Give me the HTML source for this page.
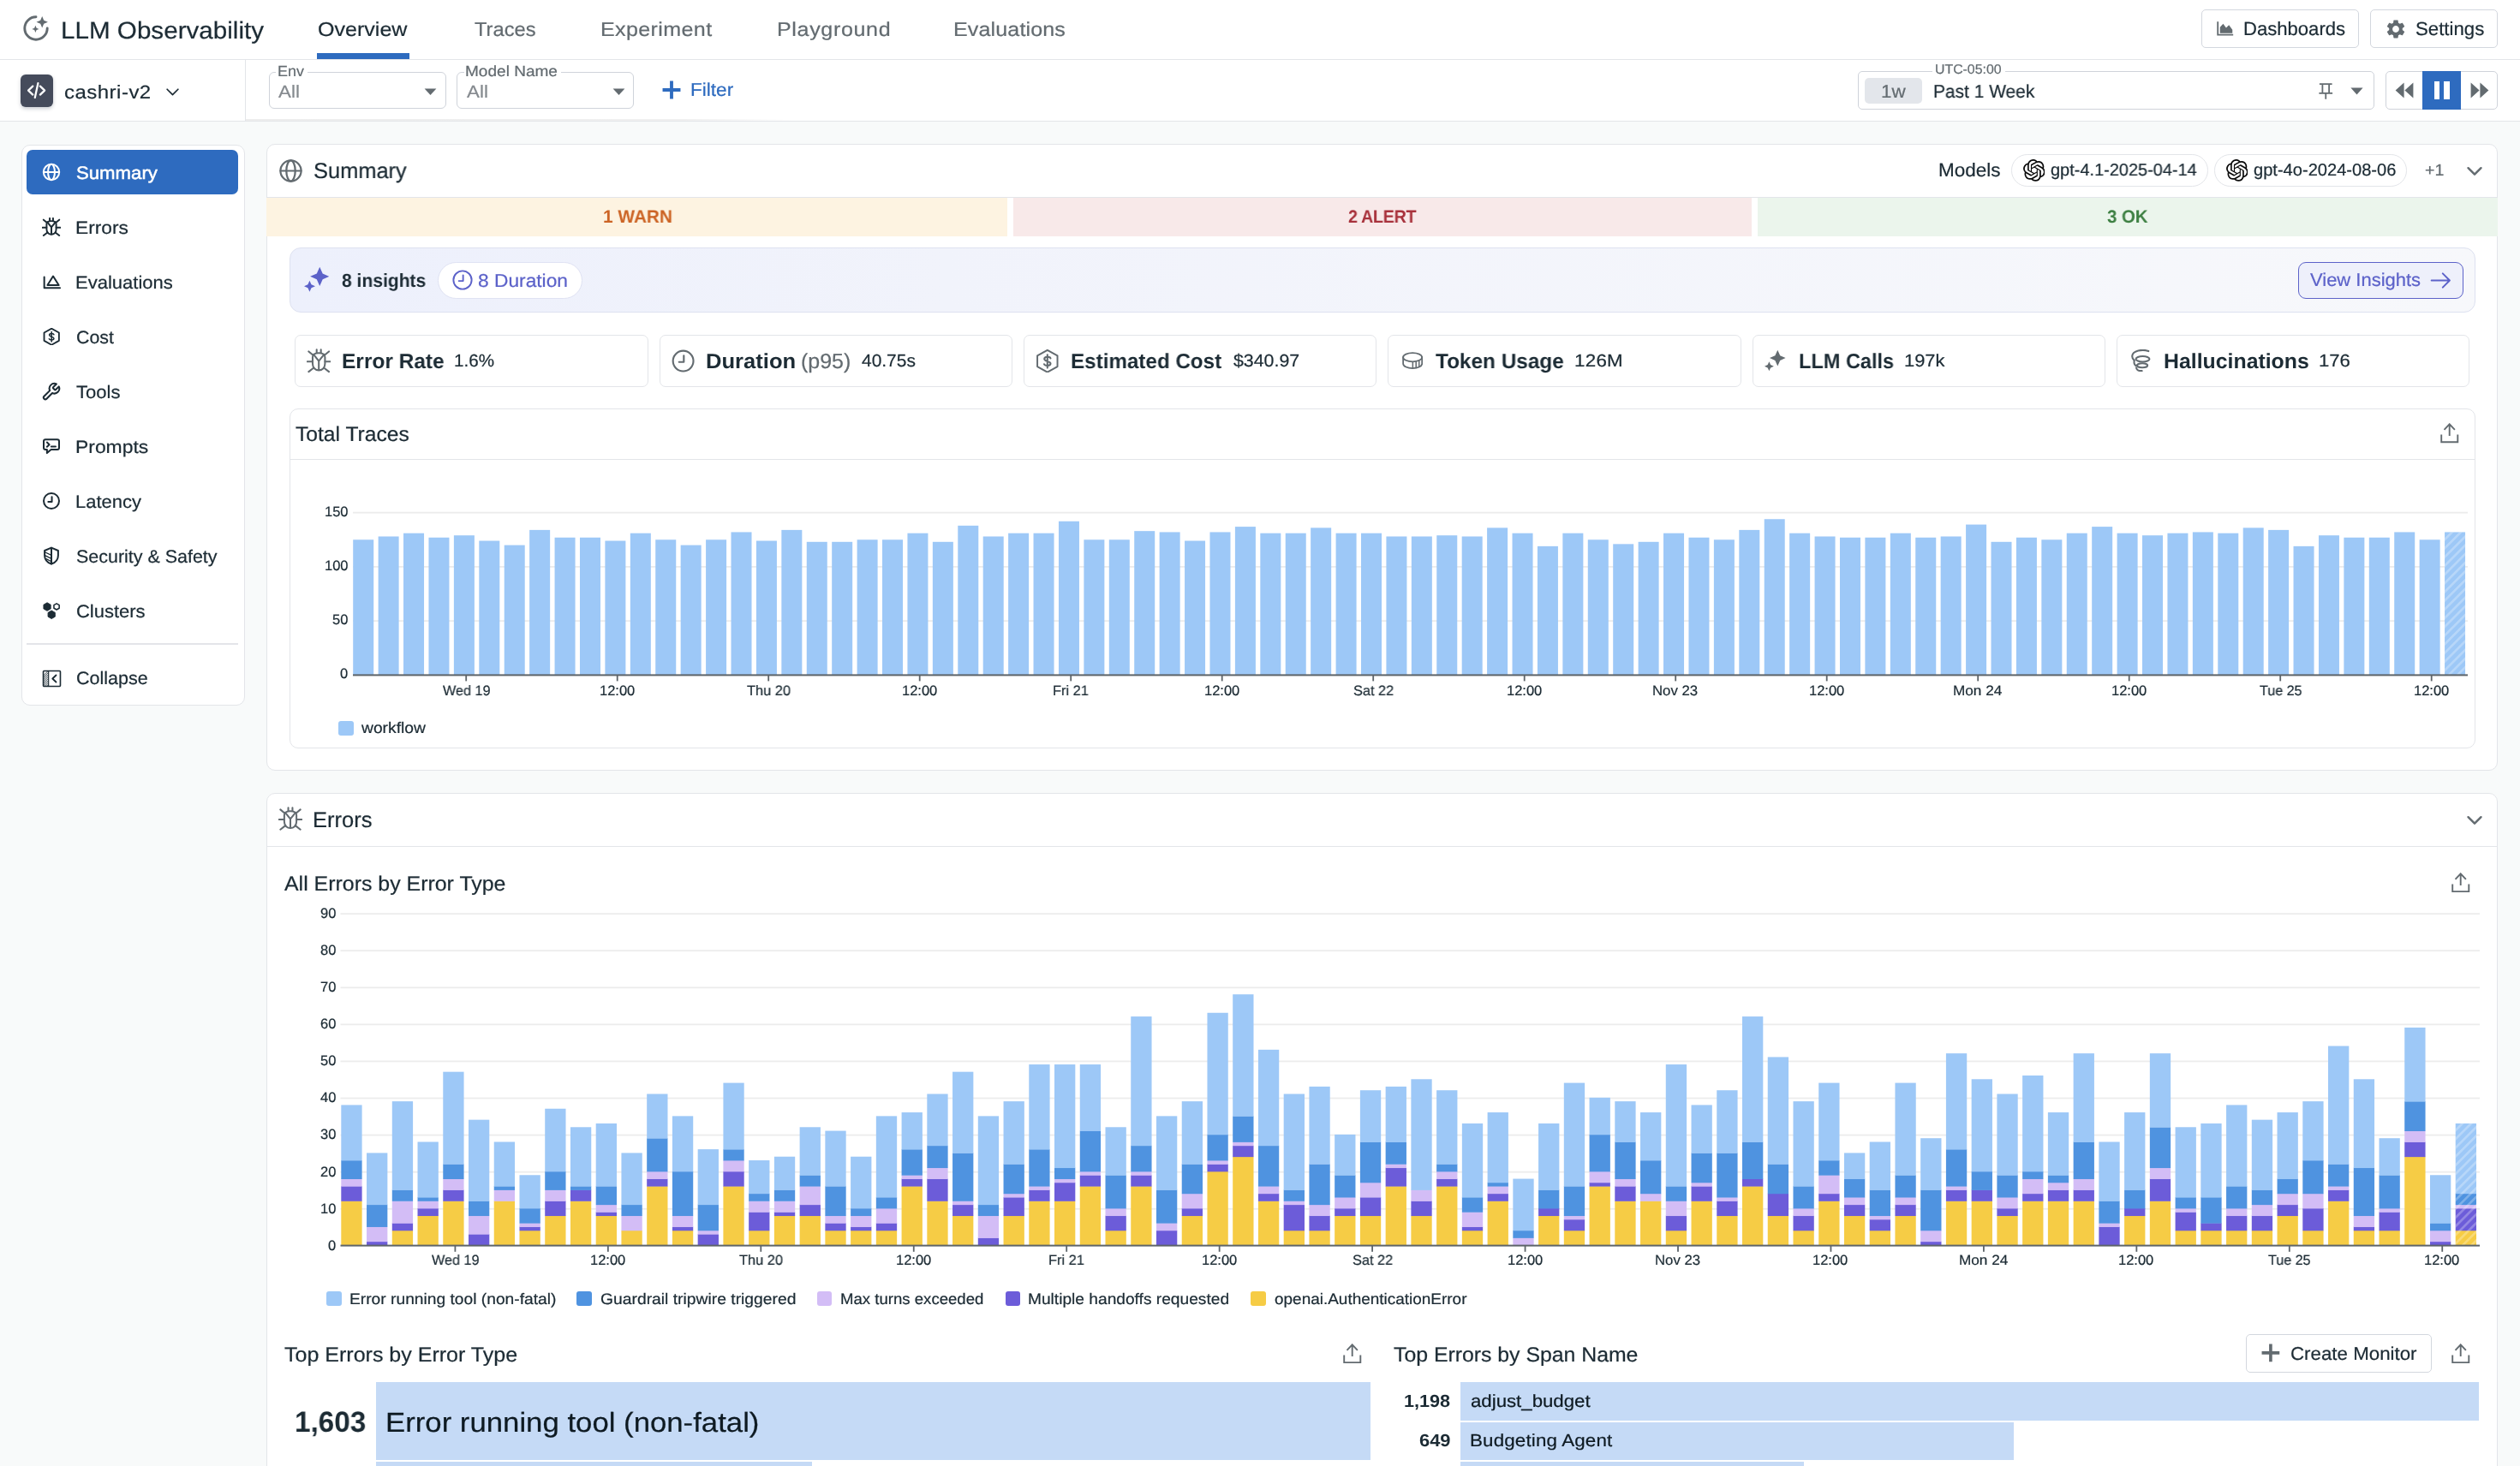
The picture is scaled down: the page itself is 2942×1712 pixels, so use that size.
<!DOCTYPE html>
<html><head><meta charset="utf-8"><title>LLM Observability</title>
<style>
html,body{margin:0;padding:0;overflow:hidden;}
body{width:2942px;height:1712px;overflow:hidden;background:#f8fafa;font-family:"Liberation Sans",sans-serif;position:relative;}
.a{position:absolute;display:block;}
.t{position:absolute;white-space:nowrap;display:block;transform-origin:0 0;will-change:transform;text-rendering:geometricPrecision;}
#root{position:absolute;left:0;top:0;width:2942px;height:1712px;overflow:hidden;}
</style></head><body>
<div id="root">
<div class="a" style="left:0.00px;top:0.00px;width:2942.00px;height:69.40px;background:#fff;"></div>
<div class="a" style="left:0.00px;top:69.00px;width:2942.00px;height:1.40px;background:#e3e5e9;"></div>
<svg class="a" style="left:25.50px;top:17.40px;" width="32.00" height="32.00" viewBox="0 0 32 32" fill="none"><path d="M 16 2.8 A 13.2 13.2 0 1 0 29.2 16" stroke="#636b70" stroke-width="2.9" stroke-linecap="round" fill="none"/><path d="M23.20,2.10 L25.19,6.81 L29.90,8.80 L25.19,10.79 L23.20,15.50 L21.21,10.79 L16.50,8.80 L21.21,6.81Z" fill="#636b70"/><path d="M15.40,12.80 L16.62,15.68 L19.50,16.90 L16.62,18.12 L15.40,21.00 L14.18,18.12 L11.30,16.90 L14.18,15.68Z" fill="#636b70"/></svg>
<span class="t" style="left:70.63px;top:22.00px;font-size:28px;line-height:28px;color:#1c2b34;-webkit-text-stroke:0.22px #1c2b34;transform:scaleX(1.0577);">LLM Observability</span>
<span class="t" style="left:371.17px;top:23.00px;font-size:23px;line-height:23px;color:#1c2b34;-webkit-text-stroke:0.22px #1c2b34;transform:scaleX(1.0899);">Overview</span>
<div class="a" style="left:370.30px;top:62.20px;width:107.70px;height:6.80px;background:#2e6bbf;"></div>
<span class="t" style="left:553.53px;top:23.00px;font-size:23px;line-height:23px;color:#636b70;-webkit-text-stroke:0.22px #636b70;transform:scaleX(1.0309);">Traces</span>
<span class="t" style="left:701.29px;top:23.00px;font-size:23px;line-height:23px;color:#636b70;-webkit-text-stroke:0.22px #636b70;letter-spacing:0.337px;transform:scaleX(1.0900);">Experiment</span>
<span class="t" style="left:906.69px;top:23.00px;font-size:23px;line-height:23px;color:#636b70;-webkit-text-stroke:0.22px #636b70;letter-spacing:0.589px;transform:scaleX(1.0900);">Playground</span>
<span class="t" style="left:1112.99px;top:23.00px;font-size:23px;line-height:23px;color:#636b70;-webkit-text-stroke:0.22px #636b70;letter-spacing:0.117px;transform:scaleX(1.0900);">Evaluations</span>
<div class="a" style="left:2570.00px;top:11.20px;width:183.60px;height:44.50px;background:#fff;border:1.4px solid #d3d7de;box-sizing:border-box;border-radius:5px;"></div>
<svg class="a" style="left:2585.60px;top:21.60px;" width="24.00" height="22.00" viewBox="0 0 24 24" fill="none"><path d="M2.4 3.6 V20.4 H22" stroke="#636b70" stroke-width="2" fill="none" stroke-linecap="butt"/><path d="M5.2 18.4 V10.6 L9.2 6.4 L13 11.4 L16.6 8 L21 14 V18.4 Z" fill="#636b70"/></svg>
<span class="t" style="left:2618.73px;top:23.00px;font-size:22px;line-height:22px;color:#1c2b34;-webkit-text-stroke:0.22px #1c2b34;transform:scaleX(1.0039);">Dashboards</span>
<div class="a" style="left:2767.00px;top:11.20px;width:149.00px;height:44.50px;background:#fff;border:1.4px solid #d3d7de;box-sizing:border-box;border-radius:5px;"></div>
<svg class="a" style="left:2783.70px;top:20.90px;" width="26.00" height="26.00" viewBox="0 0 24 24" fill="none"><path d="M19.14,12.94c0.04-0.3,0.06-0.61,0.06-0.94c0-0.32-0.02-0.64-0.07-0.94l2.03-1.58c0.18-0.14,0.23-0.41,0.12-0.61 l-1.92-3.32c-0.12-0.22-0.37-0.29-0.59-0.22l-2.39,0.96c-0.5-0.38-1.03-0.7-1.62-0.94L14.4,2.81c-0.04-0.24-0.24-0.41-0.48-0.41 h-3.84c-0.24,0-0.43,0.17-0.47,0.41L9.25,5.35C8.66,5.59,8.12,5.92,7.63,6.29L5.24,5.33c-0.22-0.08-0.47,0-0.59,0.22L2.74,8.87 C2.62,9.08,2.66,9.34,2.86,9.48l2.03,1.58C4.84,11.36,4.8,11.69,4.8,12s0.02,0.64,0.07,0.94l-2.03,1.58 c-0.18,0.14-0.23,0.41-0.12,0.61l1.92,3.32c0.12,0.22,0.37,0.29,0.59,0.22l2.39-0.96c0.5,0.38,1.03,0.7,1.62,0.94l0.36,2.54 c0.05,0.24,0.24,0.41,0.48,0.41h3.84c0.24,0,0.44-0.17,0.47-0.41l0.36-2.54c0.59-0.24,1.13-0.56,1.62-0.94l2.39,0.96 c0.22,0.08,0.47,0,0.59-0.22l1.92-3.32c0.12-0.22,0.07-0.47-0.12-0.61L19.14,12.94z M12,15.6c-1.98,0-3.6-1.62-3.6-3.6 s1.62-3.6,3.6-3.6s3.6,1.62,3.6,3.6S13.98,15.6,12,15.6z" fill="#636b70"/></svg>
<span class="t" style="left:2819.50px;top:23.00px;font-size:22px;line-height:22px;color:#1c2b34;-webkit-text-stroke:0.22px #1c2b34;transform:scaleX(1.0094);">Settings</span>
<div class="a" style="left:0.00px;top:70.40px;width:2942.00px;height:70.60px;background:#fff;"></div>
<div class="a" style="left:0.00px;top:140.60px;width:2942.00px;height:1.40px;background:#e3e5e9;"></div>
<div class="a" style="left:286.00px;top:70.40px;width:1.40px;height:70.60px;background:#e3e5e9;"></div>
<div class="a" style="left:23.80px;top:86.90px;width:38.20px;height:37.80px;background:#454b5b;border-radius:6px;box-shadow:0 2px 4px rgba(40,50,70,.25);"></div>
<svg class="a" style="left:29.40px;top:92.40px;" width="27.20" height="27.20" viewBox="0 0 24 24" fill="none"><path d="M8.2 7.6 L3.6 12 L8.2 16.4 M15.8 7.6 L20.4 12 L15.8 16.4 M13.6 4.6 L10.4 19.4" stroke="#fff" stroke-width="2.0" stroke-linecap="round" stroke-linejoin="round" fill="none"/></svg>
<span class="t" style="left:74.74px;top:97.00px;font-size:22px;line-height:22px;color:#1c2b34;-webkit-text-stroke:0.22px #1c2b34;letter-spacing:0.449px;transform:scaleX(1.0900);">cashri-v2</span>
<svg class="a" style="left:193.00px;top:98.50px;" width="17.00" height="17.00" viewBox="0 0 24 24" fill="none"><path d="M3 7.4 L12 16.4 L21 7.4" stroke="#1c2b34" stroke-width="2.4" stroke-linecap="round" stroke-linejoin="round" fill="none"/></svg>
<div class="a" style="left:287.00px;top:139.40px;width:640.00px;height:1.20px;background:linear-gradient(90deg,rgba(0,0,0,.07) 0%,rgba(0,0,0,.06) 80%,rgba(0,0,0,0) 100%);"></div>
<div class="a" style="left:313.50px;top:83.80px;width:207.20px;height:43.70px;background:#fff;border:1.4px solid #cfd3da;box-sizing:border-box;border-radius:6px;"></div>
<div class="a" style="left:322.00px;top:83.00px;width:37.40px;height:4.00px;background:#fff;"></div>
<span class="t" style="left:323.57px;top:75.00px;font-size:17.5px;line-height:17.5px;color:#636b70;-webkit-text-stroke:0.22px #636b70;transform:scaleX(1.0244);">Env</span>
<span class="t" style="left:325.00px;top:98.00px;font-size:20.5px;line-height:20.5px;color:#858a8f;-webkit-text-stroke:0.22px #858a8f;letter-spacing:0.023px;transform:scaleX(1.0900);">All</span>
<svg class="a" style="left:495.0px;top:102.8px" width="15" height="8.4" viewBox="0 0 15 8.4"><path d="M0.6 0.4 H14.4 L7.5 8 Z" fill="#636b70"/></svg>
<div class="a" style="left:533.30px;top:83.80px;width:207.20px;height:43.70px;background:#fff;border:1.4px solid #cfd3da;box-sizing:border-box;border-radius:6px;"></div>
<div class="a" style="left:541.80px;top:83.00px;width:113.60px;height:4.00px;background:#fff;"></div>
<span class="t" style="left:543.28px;top:75.00px;font-size:17.5px;line-height:17.5px;color:#636b70;-webkit-text-stroke:0.22px #636b70;transform:scaleX(1.0882);">Model Name</span>
<span class="t" style="left:544.80px;top:98.00px;font-size:20.5px;line-height:20.5px;color:#858a8f;-webkit-text-stroke:0.22px #858a8f;letter-spacing:0.023px;transform:scaleX(1.0900);">All</span>
<svg class="a" style="left:714.8px;top:102.8px" width="15" height="8.4" viewBox="0 0 15 8.4"><path d="M0.6 0.4 H14.4 L7.5 8 Z" fill="#636b70"/></svg>
<svg class="a" style="left:772.80px;top:93.60px;" width="22.00" height="22.00" viewBox="0 0 24 24" fill="none"><path d="M12 0.6 V23.4 M0.6 12 H23.4" stroke="#2e6bbf" stroke-width="4.2" stroke-linecap="butt"/></svg>
<span class="t" style="left:806.19px;top:95.00px;font-size:21.5px;line-height:21.5px;color:#2e6bbf;-webkit-text-stroke:0.22px #2e6bbf;transform:scaleX(1.0506);">Filter</span>
<div class="a" style="left:2169.30px;top:83.40px;width:602.30px;height:44.20px;background:#fff;border:1.4px solid #cfd3da;box-sizing:border-box;border-radius:5px;"></div>
<div class="a" style="left:2177.00px;top:90.80px;width:66.70px;height:30.00px;background:#e3e6eb;border-radius:5px;"></div>
<span class="t" style="left:2195.72px;top:97.00px;font-size:21.5px;line-height:21.5px;color:#636b70;-webkit-text-stroke:0.22px #636b70;transform:scaleX(1.0422);">1w</span>
<div class="a" style="left:2256.00px;top:80.00px;width:85.00px;height:6.00px;background:#fff;"></div>
<span class="t" style="left:2259.41px;top:74.00px;font-size:15.5px;line-height:15.5px;color:#636b70;-webkit-text-stroke:0.22px #636b70;transform:scaleX(1.0231);">UTC-05:00</span>
<span class="t" style="left:2257.03px;top:97.00px;font-size:21.5px;line-height:21.5px;color:#1c2b34;-webkit-text-stroke:0.22px #1c2b34;transform:scaleX(0.9737);">Past 1 Week</span>
<svg class="a" style="left:2707.00px;top:96.50px;" width="16.50" height="19.00" viewBox="0 0 16.5 19" fill="none"><path d="M0.9 1.2 H15.6 M4.4 1.2 V11.4 M12.1 1.2 V11.4 M0.4 11.8 H16.1 M8.25 11.8 V18.8" stroke="#636b70" stroke-width="1.8" fill="none" stroke-linecap="butt"/></svg>
<svg class="a" style="left:2744px;top:101.7px" width="15" height="9" viewBox="0 0 15 9"><path d="M0.4 0.4 H14.6 L7.5 8.6 Z" fill="#636b70"/></svg>
<div class="a" style="left:2785.00px;top:83.40px;width:131.00px;height:44.20px;background:#fff;border:1.4px solid #cfd3da;box-sizing:border-box;border-radius:5px;"></div>
<div class="a" style="left:2828.00px;top:83.40px;width:45.30px;height:44.20px;background:#2e6bbf;"></div>
<svg class="a" style="left:2796px;top:96px" width="22" height="19" viewBox="0 0 22 19"><path d="M10.6 0.6 V18.4 L0.6 9.5 Z M21.4 0.6 V18.4 L11.4 9.5 Z" fill="#636b70"/></svg>
<svg class="a" style="left:2884px;top:96px" width="22" height="19" viewBox="0 0 22 19"><path d="M0.6 0.6 V18.4 L10.6 9.5 Z M11.4 0.6 V18.4 L21.4 9.5 Z" fill="#636b70"/></svg>
<div class="a" style="left:2842.00px;top:95.00px;width:6.40px;height:21.00px;background:#fff;"></div>
<div class="a" style="left:2853.20px;top:95.00px;width:6.40px;height:21.00px;background:#fff;"></div>
<div class="a" style="left:24.60px;top:168.50px;width:261.00px;height:655.40px;background:#fff;border:1.4px solid #e3e5e9;box-sizing:border-box;border-radius:10px;"></div>
<div class="a" style="left:31.30px;top:175.00px;width:246.70px;height:51.70px;background:#2e6bbf;border-radius:7px;"></div>
<svg class="a" style="left:49.00px;top:190.20px;" width="22.00" height="22.00" viewBox="0 0 24 24" fill="none"><circle cx="12" cy="12" r="10" stroke="#fff" stroke-width="2.2" stroke-linecap="round" stroke-linejoin="round"/><ellipse cx="12" cy="12" rx="4.3" ry="10" stroke="#fff" stroke-width="2.2" stroke-linecap="round" stroke-linejoin="round"/><path d="M2 12 H22" stroke="#fff" stroke-width="2.2" stroke-linecap="round" stroke-linejoin="round"/></svg>
<span class="t" style="left:88.80px;top:192.00px;font-size:21px;line-height:21px;color:#fff;-webkit-text-stroke:0.5px #fff;transform:scaleX(1.0558);">Summary</span>
<svg class="a" style="left:49.00px;top:254.20px;" width="22.00" height="22.00" viewBox="0 0 24 24" fill="none"><path d="M5.9 8.4 C5.9 3.2 18.1 3.2 18.1 8.4 V15 C18.1 23.6 5.9 23.6 5.9 15 Z" stroke="#1c2b34" stroke-width="2.15" stroke-linecap="round" stroke-linejoin="round" fill="none"/><path d="M12 12.4 V21.2 M12 12.4 L6.8 5.8 M12 12.4 L17.2 5.8" stroke="#1c2b34" stroke-width="2.15" stroke-linecap="round" stroke-linejoin="round" fill="none"/><path d="M9.9 4.2 V1 M14.1 4.2 V1" stroke="#1c2b34" stroke-width="2.15" stroke-linecap="round" stroke-linejoin="round"/><path d="M6.4 6.6 L2 2.9 M17.6 6.6 L22 2.9 M5.8 12.9 H0.6 M18.2 12.9 H23.4 M7 19 L2 22.9 M17 19 L22 22.9" stroke="#1c2b34" stroke-width="2.15" stroke-linecap="round" stroke-linejoin="round"/></svg>
<span class="t" style="left:87.98px;top:256.00px;font-size:21px;line-height:21px;color:#1c2b34;-webkit-text-stroke:0.22px #1c2b34;transform:scaleX(1.0822);">Errors</span>
<svg class="a" style="left:49.00px;top:318.20px;" width="22.00" height="22.00" viewBox="0 0 24 24" fill="none"><path d="M2.9 6 V20 H23" stroke="#1c2b34" stroke-width="2.2" stroke-linecap="round" stroke-linejoin="round" fill="none" stroke-linecap="butt"/><path d="M7 16.4 L14.2 5 L21.4 16.4 Z" stroke="#1c2b34" stroke-width="2.2" stroke-linecap="round" stroke-linejoin="round" fill="none"/></svg>
<span class="t" style="left:88.04px;top:320.00px;font-size:21px;line-height:21px;color:#1c2b34;-webkit-text-stroke:0.22px #1c2b34;transform:scaleX(1.0485);">Evaluations</span>
<svg class="a" style="left:49.90px;top:383.00px;" width="20.40" height="20.40" viewBox="0 0 24 24" fill="none"><path d="M12 0.8 L22.2 6.5 V17.5 L12 23.2 L1.8 17.5 V6.5 Z" stroke="#1c2b34" stroke-width="2.2" stroke-linecap="round" stroke-linejoin="round" fill="none"/><path d="M15.2 9.1 C14.6 7.2 8.9 7 8.9 9.8 C8.9 12.6 15.2 11.6 15.2 14.4 C15.2 17.2 9.4 17 8.7 15 M12 5.4 V18.8" stroke="#1c2b34" stroke-width="1.8" stroke-linecap="round" stroke-linejoin="round" fill="none"/></svg>
<span class="t" style="left:88.73px;top:384.00px;font-size:21px;line-height:21px;color:#1c2b34;-webkit-text-stroke:0.22px #1c2b34;transform:scaleX(1.0143);">Cost</span>
<svg class="a" style="left:48.40px;top:445.60px;" width="23.20" height="23.20" viewBox="0 0 24 24" fill="none"><path d="M14.7 6.3a1 1 0 0 0 0 1.4l1.6 1.6a1 1 0 0 0 1.4 0l3.77-3.77a6 6 0 0 1-7.94 7.94l-6.91 6.91a2.12 2.12 0 0 1-3-3l6.91-6.91a6 6 0 0 1 7.94-7.94l-3.76 3.76z" stroke="#1c2b34" stroke-width="2.1" stroke-linecap="round" stroke-linejoin="round" fill="none"/></svg>
<span class="t" style="left:89.36px;top:448.00px;font-size:21px;line-height:21px;color:#1c2b34;-webkit-text-stroke:0.22px #1c2b34;transform:scaleX(1.0485);">Tools</span>
<svg class="a" style="left:49.00px;top:510.20px;" width="22.00" height="22.00" viewBox="0 0 24 24" fill="none"><path d="M4.4 3.6 H19.6 C21 3.6 21.8 4.4 21.8 5.8 V14.2 C21.8 15.6 21 16.4 19.6 16.4 H11.6 L6.4 20.8 V16.4 H4.4 C3 16.4 2.2 15.6 2.2 14.2 V5.8 C2.2 4.4 3 3.6 4.4 3.6 Z" stroke="#1c2b34" stroke-width="2.2" stroke-linecap="round" stroke-linejoin="round" fill="none"/><path d="M6.4 7.2 L9.4 10 L6.4 12.8 M11.8 12.6 H17.4" stroke="#1c2b34" stroke-width="2.2" stroke-linecap="round" stroke-linejoin="round" fill="none"/></svg>
<span class="t" style="left:87.97px;top:512.00px;font-size:21px;line-height:21px;color:#1c2b34;-webkit-text-stroke:0.22px #1c2b34;transform:scaleX(1.0896);">Prompts</span>
<svg class="a" style="left:49.00px;top:574.20px;" width="22.00" height="22.00" viewBox="0 0 24 24" fill="none"><circle cx="12" cy="12" r="9.8" stroke="#1c2b34" stroke-width="2.2" stroke-linecap="round" stroke-linejoin="round"/><path d="M12.6 6.8 V13 H8" stroke="#1c2b34" stroke-width="2.2" stroke-linecap="round" stroke-linejoin="round" fill="none"/></svg>
<span class="t" style="left:88.04px;top:576.00px;font-size:21px;line-height:21px;color:#1c2b34;-webkit-text-stroke:0.22px #1c2b34;transform:scaleX(1.0455);">Latency</span>
<svg class="a" style="left:49.00px;top:638.20px;" width="22.00" height="22.00" viewBox="0 0 24 24" fill="none"><path d="M12 1.8 L20.6 5.4 V11.6 C20.6 17 16.6 20.8 12 22.4 C7.4 20.8 3.4 17 3.4 11.6 V5.4 Z" stroke="#1c2b34" stroke-width="2.2" stroke-linecap="round" stroke-linejoin="round" fill="none"/><path d="M12 1.8 V22.4" stroke="#1c2b34" stroke-width="2.2" stroke-linecap="round" stroke-linejoin="round"/><path d="M3.6 7.4 L12 11.4 M3.8 11.6 L12 15.6 M5.4 16 L12 19.4" stroke="#1c2b34" stroke-width="1.4" stroke-linecap="round" stroke-linejoin="round"/></svg>
<span class="t" style="left:88.83px;top:640.00px;font-size:21px;line-height:21px;color:#1c2b34;-webkit-text-stroke:0.22px #1c2b34;transform:scaleX(1.0217);">Security &amp; Safety</span>
<svg class="a" style="left:49.00px;top:702.20px;" width="22.00" height="22.00" viewBox="0 0 24 24" fill="none"><polygon points="11.10,9.80 6.60,12.40 2.10,9.80 2.10,4.60 6.60,2.00 11.10,4.60" fill="#1c2b34" stroke="#1c2b34" stroke-width="1" stroke-linejoin="round"/><polygon points="16.70,19.80 12.20,22.40 7.70,19.80 7.70,14.60 12.20,12.00 16.70,14.60" fill="#1c2b34" stroke="#1c2b34" stroke-width="1" stroke-linejoin="round"/><polygon points="21.98,8.95 18.60,10.90 15.22,8.95 15.22,5.05 18.60,3.10 21.98,5.05" fill="none" stroke="#1c2b34" stroke-width="1.7" stroke-linejoin="round"/></svg>
<span class="t" style="left:88.70px;top:704.00px;font-size:21px;line-height:21px;color:#1c2b34;-webkit-text-stroke:0.22px #1c2b34;transform:scaleX(1.0467);">Clusters</span>
<div class="a" style="left:31.00px;top:751.30px;width:247.00px;height:1.60px;background:#e3e5e9;"></div>
<svg class="a" style="left:48.50px;top:780.50px;" width="23.00" height="23.00" viewBox="0 0 24 24" fill="none"><clipPath id="cpc"><rect x="1.6" y="2.6" width="6.4" height="18.8"/></clipPath><g clip-path="url(#cpc)"><path d="M1.6 8.6 L8 2.0" stroke="#1c2b34" stroke-width="0.9"/><path d="M1.6 11.0 L8 4.4" stroke="#1c2b34" stroke-width="0.9"/><path d="M1.6 13.4 L8 6.800000000000001" stroke="#1c2b34" stroke-width="0.9"/><path d="M1.6 15.799999999999999 L8 9.2" stroke="#1c2b34" stroke-width="0.9"/><path d="M1.6 18.2 L8 11.6" stroke="#1c2b34" stroke-width="0.9"/><path d="M1.6 20.6 L8 14.0" stroke="#1c2b34" stroke-width="0.9"/><path d="M1.6 23.0 L8 16.4" stroke="#1c2b34" stroke-width="0.9"/><path d="M1.6 25.4 L8 18.8" stroke="#1c2b34" stroke-width="0.9"/><path d="M1.6 27.799999999999997 L8 21.2" stroke="#1c2b34" stroke-width="0.9"/></g><rect x="1.6" y="2.6" width="20.8" height="18.8" rx="1" stroke="#1c2b34" stroke-width="1.7" stroke-linecap="round" stroke-linejoin="round" fill="none"/><path d="M8 2.6 V21.4" stroke="#1c2b34" stroke-width="1.2"/><path d="M17.2 7.8 L12.8 12 L17.2 16.2" stroke="#1c2b34" stroke-width="1.9" stroke-linecap="round" stroke-linejoin="round" fill="none"/></svg>
<span class="t" style="left:88.72px;top:782.00px;font-size:21px;line-height:21px;color:#1c2b34;-webkit-text-stroke:0.22px #1c2b34;transform:scaleX(1.0239);">Collapse</span>
<div class="a" style="left:310.90px;top:167.80px;width:2605.50px;height:732.20px;background:#fff;border:1.4px solid #e3e5e9;box-sizing:border-box;border-radius:10px;"></div>
<svg class="a" style="left:324.70px;top:184.60px;" width="29.00" height="29.00" viewBox="0 0 24 24" fill="none"><circle cx="12" cy="12" r="10" stroke="#636b70" stroke-width="1.85" stroke-linecap="round" stroke-linejoin="round"/><ellipse cx="12" cy="12" rx="4.3" ry="10" stroke="#636b70" stroke-width="1.85" stroke-linecap="round" stroke-linejoin="round"/><path d="M2 12 H22" stroke="#636b70" stroke-width="1.85" stroke-linecap="round" stroke-linejoin="round"/></svg>
<span class="t" style="left:365.86px;top:188.00px;font-size:25.5px;line-height:25.5px;color:#1c2b34;-webkit-text-stroke:0.22px #1c2b34;transform:scaleX(0.9964);">Summary</span>
<span class="t" style="left:2262.90px;top:188.00px;font-size:22px;line-height:22px;color:#1c2b34;-webkit-text-stroke:0.22px #1c2b34;transform:scaleX(1.0231);">Models</span>
<div class="a" style="left:2348.40px;top:180.20px;width:229.20px;height:37.40px;background:#fff;border:1.4px solid #e3e5e9;box-sizing:border-box;border-radius:18.7px;"></div>
<svg class="a" style="left:2361.60px;top:186.20px;" width="25.80" height="25.80" viewBox="0 0 24 24" fill="none"><path d="M22.2819 9.8211a5.9847 5.9847 0 0 0-.5157-4.9108 6.0462 6.0462 0 0 0-6.5098-2.9A6.0651 6.0651 0 0 0 4.9807 4.1818a5.9847 5.9847 0 0 0-3.9977 2.9 6.0462 6.0462 0 0 0 .7427 7.0966 5.98 5.98 0 0 0 .511 4.9107 6.051 6.051 0 0 0 6.5146 2.9001A5.9847 5.9847 0 0 0 13.2599 24a6.0557 6.0557 0 0 0 5.7718-4.2058 5.9894 5.9894 0 0 0 3.9977-2.9001 6.0557 6.0557 0 0 0-.7475-7.0729zm-9.022 12.6081a4.4755 4.4755 0 0 1-2.8764-1.0408l.1419-.0804 4.7783-2.7582a.7948.7948 0 0 0 .3927-.6813v-6.7369l2.02 1.1686a.071.071 0 0 1 .038.0615v5.5826a4.504 4.504 0 0 1-4.4945 4.4849zm-9.6607-4.1254a4.4708 4.4708 0 0 1-.5346-3.0137l.142.0852 4.783 2.7582a.7712.7712 0 0 0 .7806 0l5.8428-3.3685v2.3324a.0804.0804 0 0 1-.0332.0615L9.74 19.9502a4.4992 4.4992 0 0 1-6.1408-1.6464zM2.3408 7.8956a4.485 4.485 0 0 1 2.3655-1.9728V11.6a.7664.7664 0 0 0 .3879.6765l5.8144 3.3543-2.0201 1.1685a.0757.0757 0 0 1-.071 0l-4.8303-2.7865A4.504 4.504 0 0 1 2.3408 7.872zm16.5963 3.8558L13.1038 8.364 15.1192 7.2a.0757.0757 0 0 1 .071 0l4.8303 2.7913a4.4944 4.4944 0 0 1-.6765 8.1042v-5.6772a.79.79 0 0 0-.407-.667zm2.0107-3.0231l-.142-.0852-4.7735-2.7818a.7759.7759 0 0 0-.7854 0L9.409 9.2297V6.8974a.0662.0662 0 0 1 .0284-.0615l4.8303-2.7866a4.4992 4.4992 0 0 1 6.6802 4.66zM8.3065 12.863l-2.02-1.1638a.0804.0804 0 0 1-.038-.0567V6.0742a4.4992 4.4992 0 0 1 7.3757-3.4537l-.142.0805L8.704 5.459a.7948.7948 0 0 0-.3927.6813zm1.0976-2.3654l2.602-1.4998 2.6069 1.4998v2.9994l-2.5974 1.4997-2.6067-1.4997Z" fill="#0b0b0b"/></svg>
<span class="t" style="left:2393.60px;top:189.00px;font-size:20px;line-height:20px;color:#1c2b34;-webkit-text-stroke:0.22px #1c2b34;transform:scaleX(0.9971);">gpt-4.1-2025-04-14</span>
<div class="a" style="left:2585.40px;top:180.20px;width:224.30px;height:37.40px;background:#fff;border:1.4px solid #e3e5e9;box-sizing:border-box;border-radius:18.7px;"></div>
<svg class="a" style="left:2598.60px;top:186.20px;" width="25.80" height="25.80" viewBox="0 0 24 24" fill="none"><path d="M22.2819 9.8211a5.9847 5.9847 0 0 0-.5157-4.9108 6.0462 6.0462 0 0 0-6.5098-2.9A6.0651 6.0651 0 0 0 4.9807 4.1818a5.9847 5.9847 0 0 0-3.9977 2.9 6.0462 6.0462 0 0 0 .7427 7.0966 5.98 5.98 0 0 0 .511 4.9107 6.051 6.051 0 0 0 6.5146 2.9001A5.9847 5.9847 0 0 0 13.2599 24a6.0557 6.0557 0 0 0 5.7718-4.2058 5.9894 5.9894 0 0 0 3.9977-2.9001 6.0557 6.0557 0 0 0-.7475-7.0729zm-9.022 12.6081a4.4755 4.4755 0 0 1-2.8764-1.0408l.1419-.0804 4.7783-2.7582a.7948.7948 0 0 0 .3927-.6813v-6.7369l2.02 1.1686a.071.071 0 0 1 .038.0615v5.5826a4.504 4.504 0 0 1-4.4945 4.4849zm-9.6607-4.1254a4.4708 4.4708 0 0 1-.5346-3.0137l.142.0852 4.783 2.7582a.7712.7712 0 0 0 .7806 0l5.8428-3.3685v2.3324a.0804.0804 0 0 1-.0332.0615L9.74 19.9502a4.4992 4.4992 0 0 1-6.1408-1.6464zM2.3408 7.8956a4.485 4.485 0 0 1 2.3655-1.9728V11.6a.7664.7664 0 0 0 .3879.6765l5.8144 3.3543-2.0201 1.1685a.0757.0757 0 0 1-.071 0l-4.8303-2.7865A4.504 4.504 0 0 1 2.3408 7.872zm16.5963 3.8558L13.1038 8.364 15.1192 7.2a.0757.0757 0 0 1 .071 0l4.8303 2.7913a4.4944 4.4944 0 0 1-.6765 8.1042v-5.6772a.79.79 0 0 0-.407-.667zm2.0107-3.0231l-.142-.0852-4.7735-2.7818a.7759.7759 0 0 0-.7854 0L9.409 9.2297V6.8974a.0662.0662 0 0 1 .0284-.0615l4.8303-2.7866a4.4992 4.4992 0 0 1 6.6802 4.66zM8.3065 12.863l-2.02-1.1638a.0804.0804 0 0 1-.038-.0567V6.0742a4.4992 4.4992 0 0 1 7.3757-3.4537l-.142.0805L8.704 5.459a.7948.7948 0 0 0-.3927.6813zm1.0976-2.3654l2.602-1.4998 2.6069 1.4998v2.9994l-2.5974 1.4997-2.6067-1.4997Z" fill="#0b0b0b"/></svg>
<span class="t" style="left:2630.60px;top:189.00px;font-size:20px;line-height:20px;color:#1c2b34;-webkit-text-stroke:0.22px #1c2b34;transform:scaleX(1.0043);">gpt-4o-2024-08-06</span>
<span class="t" style="left:2830.82px;top:190.00px;font-size:19px;line-height:19px;color:#636b70;-webkit-text-stroke:0.22px #636b70;transform:scaleX(1.0325);">+1</span>
<svg class="a" style="left:2878.60px;top:189.60px;" width="20.00" height="20.00" viewBox="0 0 24 24" fill="none"><path d="M3 7.4 L12 16.4 L21 7.4" stroke="#636b70" stroke-width="2.9" stroke-linecap="round" stroke-linejoin="round" fill="none"/></svg>
<div class="a" style="left:311.60px;top:229.90px;width:2604.10px;height:1.20px;background:#e3e5e9;"></div>
<div class="a" style="left:310.90px;top:231.00px;width:864.90px;height:45.00px;background:#fdf3e1;"></div>
<div class="a" style="left:1182.50px;top:231.00px;width:862.50px;height:45.00px;background:#f8e9e9;"></div>
<div class="a" style="left:2052.00px;top:231.00px;width:864.40px;height:45.00px;background:#ebf5ec;"></div>
<span class="t" style="left:703.80px;top:243.00px;font-size:21px;line-height:21px;color:#cc6425;font-weight:700;transform:scaleX(0.9916);">1 WARN</span>
<span class="t" style="left:1573.51px;top:243.00px;font-size:21px;line-height:21px;color:#a8323c;font-weight:700;letter-spacing:-0.361px;transform:scaleX(0.9400);">2 ALERT</span>
<span class="t" style="left:2459.69px;top:243.00px;font-size:21px;line-height:21px;color:#3e8043;font-weight:700;transform:scaleX(0.9711);">3 OK</span>
<div class="a" style="left:338.40px;top:289.20px;width:2551.80px;height:75.60px;background:linear-gradient(90deg,#edf0fc 0%,#f1f3fb 30%,#f7f8fb 100%);border:1.4px solid #dde1f0;box-sizing:border-box;border-radius:13px;"></div>
<svg class="a" style="left:355.10px;top:312.10px;" width="29.10" height="28.60" viewBox="0 0 24.4 24" fill="none"><path d="M15.30,-0.20 L18.19,6.21 L24.60,9.10 L18.19,11.99 L15.30,18.40 L12.41,11.99 L6.00,9.10 L12.41,6.21Z" fill="#5c62c9"/><path d="M5.40,13.20 L7.11,16.99 L10.90,18.70 L7.11,20.41 L5.40,24.20 L3.69,20.41 L-0.10,18.70 L3.69,16.99Z" fill="#5c62c9"/></svg>
<span class="t" style="left:399.37px;top:317.00px;font-size:22px;line-height:22px;color:#1c2b34;font-weight:700;transform:scaleX(0.9566);">8 insights</span>
<div class="a" style="left:511.00px;top:305.70px;width:168.50px;height:43.00px;background:#fff;border:1.4px solid #dfe2f3;box-sizing:border-box;border-radius:21.5px;"></div>
<svg class="a" style="left:526.80px;top:313.60px;" width="26.00" height="26.00" viewBox="0 0 24 24" fill="none"><circle cx="12" cy="12" r="9.8" stroke="#5c62c9" stroke-width="1.75" stroke-linecap="round" stroke-linejoin="round"/><path d="M12.6 6.8 V13 H8" stroke="#5c62c9" stroke-width="1.75" stroke-linecap="round" stroke-linejoin="round" fill="none"/></svg>
<span class="t" style="left:558.48px;top:318.00px;font-size:21.5px;line-height:21.5px;color:#5c62c9;-webkit-text-stroke:0.22px #5c62c9;transform:scaleX(1.0583);">8 Duration</span>
<div class="a" style="left:2683.30px;top:305.50px;width:192.30px;height:43.00px;background:#eef0fb;border:1.6px solid #5c62c9;box-sizing:border-box;border-radius:9px;"></div>
<span class="t" style="left:2696.89px;top:317.00px;font-size:21.5px;line-height:21.5px;color:#5c62c9;-webkit-text-stroke:0.22px #5c62c9;transform:scaleX(1.0219);">View Insights</span>
<svg class="a" style="left:2837.00px;top:314.60px;" width="25.00" height="25.00" viewBox="0 0 24 24" fill="none"><path d="M1.6 12 H22 M14.2 4.2 L22 12 L14.2 19.8" stroke="#5c62c9" stroke-width="1.9" stroke-linecap="round" stroke-linejoin="round" fill="none"/></svg>
<div class="a" style="left:344.30px;top:391.20px;width:412.30px;height:60.60px;background:#fff;border:1.4px solid #e3e5e9;box-sizing:border-box;border-radius:7px;"></div>
<svg class="a" style="left:357.70px;top:407.40px;" width="28.40" height="28.40" viewBox="0 0 24 24" fill="none"><path d="M5.9 8.4 C5.9 3.2 18.1 3.2 18.1 8.4 V15 C18.1 23.6 5.9 23.6 5.9 15 Z" stroke="#636b70" stroke-width="1.75" stroke-linecap="round" stroke-linejoin="round" fill="none"/><path d="M12 12.4 V21.2 M12 12.4 L6.8 5.8 M12 12.4 L17.2 5.8" stroke="#636b70" stroke-width="1.75" stroke-linecap="round" stroke-linejoin="round" fill="none"/><path d="M9.9 4.2 V1 M14.1 4.2 V1" stroke="#636b70" stroke-width="1.75" stroke-linecap="round" stroke-linejoin="round"/><path d="M6.4 6.6 L2 2.9 M17.6 6.6 L22 2.9 M5.8 12.9 H0.6 M18.2 12.9 H23.4 M7 19 L2 22.9 M17 19 L22 22.9" stroke="#636b70" stroke-width="1.75" stroke-linecap="round" stroke-linejoin="round"/></svg>
<span class="t" style="left:398.91px;top:411.00px;font-size:24.5px;line-height:24.5px;color:#1c2b34;font-weight:700;transform:scaleX(0.9978);">Error Rate</span>
<span class="t" style="left:530.46px;top:412.00px;font-size:20.5px;line-height:20.5px;color:#1c2b34;-webkit-text-stroke:0.22px #1c2b34;transform:scaleX(1.0048);">1.6%</span>
<div class="a" style="left:769.64px;top:391.20px;width:412.30px;height:60.60px;background:#fff;border:1.4px solid #e3e5e9;box-sizing:border-box;border-radius:7px;"></div>
<svg class="a" style="left:782.54px;top:406.80px;" width="29.20" height="29.20" viewBox="0 0 24 24" fill="none"><circle cx="12" cy="12" r="9.8" stroke="#636b70" stroke-width="1.75" stroke-linecap="round" stroke-linejoin="round"/><path d="M12.6 6.8 V13 H8" stroke="#636b70" stroke-width="1.75" stroke-linecap="round" stroke-linejoin="round" fill="none"/></svg>
<span class="t" style="left:824.18px;top:411.00px;font-size:24.5px;line-height:24.5px;color:#1c2b34;font-weight:700;transform:scaleX(1.0437);">Duration</span>
<span class="t" style="left:934.84px;top:411.00px;font-size:24.5px;line-height:24.5px;color:#636b70;-webkit-text-stroke:0.22px #636b70;transform:scaleX(1.0195);">(p95)</span>
<span class="t" style="left:1005.52px;top:412.00px;font-size:20.5px;line-height:20.5px;color:#1c2b34;-webkit-text-stroke:0.22px #1c2b34;transform:scaleX(1.0219);">40.75s</span>
<div class="a" style="left:1194.98px;top:391.20px;width:412.30px;height:60.60px;background:#fff;border:1.4px solid #e3e5e9;box-sizing:border-box;border-radius:7px;"></div>
<svg class="a" style="left:1209.38px;top:407.60px;" width="27.60" height="27.60" viewBox="0 0 24 24" fill="none"><path d="M12 0.8 L22.2 6.5 V17.5 L12 23.2 L1.8 17.5 V6.5 Z" stroke="#636b70" stroke-width="1.7" stroke-linecap="round" stroke-linejoin="round" fill="none"/><path d="M15.2 9.1 C14.6 7.2 8.9 7 8.9 9.8 C8.9 12.6 15.2 11.6 15.2 14.4 C15.2 17.2 9.4 17 8.7 15 M12 5.4 V18.8" stroke="#636b70" stroke-width="1.8" stroke-linecap="round" stroke-linejoin="round" fill="none"/></svg>
<span class="t" style="left:1249.61px;top:411.00px;font-size:24.5px;line-height:24.5px;color:#1c2b34;font-weight:700;transform:scaleX(0.9875);">Estimated Cost</span>
<span class="t" style="left:1439.57px;top:412.00px;font-size:20.5px;line-height:20.5px;color:#1c2b34;-webkit-text-stroke:0.22px #1c2b34;transform:scaleX(1.0415);">$340.97</span>
<div class="a" style="left:1620.32px;top:391.20px;width:412.30px;height:60.60px;background:#fff;border:1.4px solid #e3e5e9;box-sizing:border-box;border-radius:7px;"></div>
<svg class="a" style="left:1636.52px;top:408.70px;" width="24.30" height="24.30" viewBox="0 0 24 24" fill="none"><ellipse cx="12" cy="8.1" rx="10.9" ry="5.0" stroke="#636b70" stroke-width="1.75" stroke-linecap="round" stroke-linejoin="round"/><path d="M1.1 8.1 V15.6 C1.1 18.6 6 20.8 12 20.8 C18 20.8 22.9 18.6 22.9 15.6 V8.1" stroke="#636b70" stroke-width="1.75" stroke-linecap="round" stroke-linejoin="round" fill="none"/><path d="M12.2 14 V20.6 M16 13.6 V20.2 M19.5 12.4 V19" stroke="#636b70" stroke-width="1.5" stroke-linecap="round" stroke-linejoin="round"/></svg>
<span class="t" style="left:1676.28px;top:411.00px;font-size:24.5px;line-height:24.5px;color:#1c2b34;font-weight:700;transform:scaleX(0.9942);">Token Usage</span>
<span class="t" style="left:1837.94px;top:412.00px;font-size:20.5px;line-height:20.5px;color:#1c2b34;-webkit-text-stroke:0.22px #1c2b34;letter-spacing:0.245px;transform:scaleX(1.0900);">126M</span>
<div class="a" style="left:2045.66px;top:391.20px;width:412.30px;height:60.60px;background:#fff;border:1.4px solid #e3e5e9;box-sizing:border-box;border-radius:7px;"></div>
<svg class="a" style="left:2060.36px;top:409.40px;" width="24.40" height="24.00" viewBox="0 0 24.4 24" fill="none"><path d="M15.30,-0.20 L18.19,6.21 L24.60,9.10 L18.19,11.99 L15.30,18.40 L12.41,11.99 L6.00,9.10 L12.41,6.21Z" fill="#636b70"/><path d="M5.40,13.20 L7.11,16.99 L10.90,18.70 L7.11,20.41 L5.40,24.20 L3.69,20.41 L-0.10,18.70 L3.69,16.99Z" fill="#636b70"/></svg>
<span class="t" style="left:2100.33px;top:411.00px;font-size:24.5px;line-height:24.5px;color:#1c2b34;font-weight:700;transform:scaleX(0.9605);">LLM Calls</span>
<span class="t" style="left:2223.22px;top:412.00px;font-size:20.5px;line-height:20.5px;color:#1c2b34;-webkit-text-stroke:0.22px #1c2b34;transform:scaleX(1.0664);">197k</span>
<div class="a" style="left:2471.00px;top:391.20px;width:412.30px;height:60.60px;background:#fff;border:1.4px solid #e3e5e9;box-sizing:border-box;border-radius:7px;"></div>
<svg class="a" style="left:2485.60px;top:408.10px;" width="26.20" height="26.20" viewBox="0 0 24 24" fill="none"><path d="M20.4 1.9 C14 -0.6 3.4 1.4 3 7 C2.8 9 3.8 10.6 5.2 11.8" stroke="#636b70" stroke-width="1.9" stroke-linecap="round" stroke-linejoin="round" fill="none"/><ellipse cx="14.2" cy="10.3" rx="7.3" ry="3.0" stroke="#636b70" stroke-width="1.9" stroke-linecap="round" stroke-linejoin="round"/><path d="M5.2 12.4 C4.6 14.6 5.6 16.6 7.2 17.8" stroke="#636b70" stroke-width="1.9" stroke-linecap="round" stroke-linejoin="round" fill="none"/><ellipse cx="13.8" cy="17.2" rx="5.6" ry="2.3" stroke="#636b70" stroke-width="1.9" stroke-linecap="round" stroke-linejoin="round"/><path d="M7.4 19.8 C7.8 21.8 10.2 23.2 13.4 23.0" stroke="#636b70" stroke-width="1.9" stroke-linecap="round" stroke-linejoin="round" fill="none"/></svg>
<span class="t" style="left:2525.59px;top:411.00px;font-size:24.5px;line-height:24.5px;color:#1c2b34;font-weight:700;transform:scaleX(1.0140);">Hallucinations</span>
<span class="t" style="left:2707.14px;top:412.00px;font-size:20.5px;line-height:20.5px;color:#1c2b34;-webkit-text-stroke:0.22px #1c2b34;transform:scaleX(1.0795);">176</span>
<div class="a" style="left:338.40px;top:477.00px;width:2551.80px;height:396.60px;background:#fff;border:1.4px solid #e3e5e9;box-sizing:border-box;border-radius:10px;"></div>
<div class="a" style="left:339.20px;top:535.80px;width:2550.20px;height:1.40px;background:#e3e5e9;"></div>
<span class="t" style="left:345.21px;top:496.00px;font-size:24px;line-height:24px;color:#1c2b34;-webkit-text-stroke:0.22px #1c2b34;transform:scaleX(1.0255);">Total Traces</span>
<svg class="a" style="left:2849.20px;top:494.40px;" width="21.50" height="23.20" viewBox="0 0 21.5 23.2" fill="none"><path d="M10.7 15 V1.6 M4.5 7.9 L10.7 1.3 L16.9 7.9" stroke="#636b70" stroke-width="1.9" fill="none" stroke-linecap="butt" stroke-linejoin="miter"/><path d="M1.2 13.4 V22.2 H20.3 V13.4" stroke="#636b70" stroke-width="1.9" fill="none" stroke-linecap="butt" stroke-linejoin="miter"/></svg>
<svg class="a" style="left:0;top:0" width="2942" height="1712" viewBox="0 0 2942 1712"><defs><pattern id="hatch" width="7.2" height="7.2" patternUnits="userSpaceOnUse" patternTransform="rotate(45)"><rect x="0" y="0" width="2.6" height="7.2" fill="rgba(255,255,255,0.27)"/></pattern></defs><rect x="412" y="724.25" width="2469" height="1.8" fill="#ececec"/><rect x="412" y="661.00" width="2469" height="1.8" fill="#ececec"/><rect x="412" y="597.75" width="2469" height="1.8" fill="#ececec"/><rect x="412.20" y="630.27" width="24.0" height="158.12" fill="#9dc8f7"/><rect x="441.62" y="626.48" width="24.0" height="161.92" fill="#9dc8f7"/><rect x="471.04" y="622.68" width="24.0" height="165.71" fill="#9dc8f7"/><rect x="500.46" y="627.75" width="24.0" height="160.66" fill="#9dc8f7"/><rect x="529.88" y="625.22" width="24.0" height="163.18" fill="#9dc8f7"/><rect x="559.30" y="631.54" width="24.0" height="156.86" fill="#9dc8f7"/><rect x="588.72" y="636.60" width="24.0" height="151.80" fill="#9dc8f7"/><rect x="618.14" y="618.89" width="24.0" height="169.51" fill="#9dc8f7"/><rect x="647.56" y="627.75" width="24.0" height="160.66" fill="#9dc8f7"/><rect x="676.98" y="627.75" width="24.0" height="160.66" fill="#9dc8f7"/><rect x="706.40" y="631.54" width="24.0" height="156.86" fill="#9dc8f7"/><rect x="735.82" y="622.68" width="24.0" height="165.71" fill="#9dc8f7"/><rect x="765.24" y="630.27" width="24.0" height="158.12" fill="#9dc8f7"/><rect x="794.66" y="636.60" width="24.0" height="151.80" fill="#9dc8f7"/><rect x="824.08" y="630.27" width="24.0" height="158.12" fill="#9dc8f7"/><rect x="853.50" y="621.42" width="24.0" height="166.98" fill="#9dc8f7"/><rect x="882.92" y="631.54" width="24.0" height="156.86" fill="#9dc8f7"/><rect x="912.34" y="618.89" width="24.0" height="169.51" fill="#9dc8f7"/><rect x="941.76" y="632.80" width="24.0" height="155.59" fill="#9dc8f7"/><rect x="971.18" y="632.80" width="24.0" height="155.59" fill="#9dc8f7"/><rect x="1000.60" y="630.27" width="24.0" height="158.12" fill="#9dc8f7"/><rect x="1030.02" y="630.27" width="24.0" height="158.12" fill="#9dc8f7"/><rect x="1059.44" y="622.68" width="24.0" height="165.71" fill="#9dc8f7"/><rect x="1088.86" y="632.80" width="24.0" height="155.59" fill="#9dc8f7"/><rect x="1118.28" y="613.83" width="24.0" height="174.57" fill="#9dc8f7"/><rect x="1147.70" y="626.48" width="24.0" height="161.92" fill="#9dc8f7"/><rect x="1177.12" y="622.68" width="24.0" height="165.71" fill="#9dc8f7"/><rect x="1206.54" y="622.68" width="24.0" height="165.71" fill="#9dc8f7"/><rect x="1235.96" y="608.77" width="24.0" height="179.63" fill="#9dc8f7"/><rect x="1265.38" y="630.27" width="24.0" height="158.12" fill="#9dc8f7"/><rect x="1294.80" y="630.27" width="24.0" height="158.12" fill="#9dc8f7"/><rect x="1324.22" y="620.15" width="24.0" height="168.24" fill="#9dc8f7"/><rect x="1353.64" y="621.42" width="24.0" height="166.98" fill="#9dc8f7"/><rect x="1383.06" y="631.54" width="24.0" height="156.86" fill="#9dc8f7"/><rect x="1412.48" y="621.42" width="24.0" height="166.98" fill="#9dc8f7"/><rect x="1441.90" y="615.10" width="24.0" height="173.30" fill="#9dc8f7"/><rect x="1471.32" y="622.68" width="24.0" height="165.71" fill="#9dc8f7"/><rect x="1500.74" y="622.68" width="24.0" height="165.71" fill="#9dc8f7"/><rect x="1530.16" y="616.36" width="24.0" height="172.04" fill="#9dc8f7"/><rect x="1559.58" y="622.68" width="24.0" height="165.71" fill="#9dc8f7"/><rect x="1589.00" y="622.68" width="24.0" height="165.71" fill="#9dc8f7"/><rect x="1618.42" y="626.48" width="24.0" height="161.92" fill="#9dc8f7"/><rect x="1647.84" y="626.48" width="24.0" height="161.92" fill="#9dc8f7"/><rect x="1677.26" y="625.22" width="24.0" height="163.18" fill="#9dc8f7"/><rect x="1706.68" y="626.48" width="24.0" height="161.92" fill="#9dc8f7"/><rect x="1736.10" y="616.36" width="24.0" height="172.04" fill="#9dc8f7"/><rect x="1765.52" y="622.68" width="24.0" height="165.71" fill="#9dc8f7"/><rect x="1794.94" y="637.87" width="24.0" height="150.53" fill="#9dc8f7"/><rect x="1824.36" y="622.68" width="24.0" height="165.71" fill="#9dc8f7"/><rect x="1853.78" y="630.27" width="24.0" height="158.12" fill="#9dc8f7"/><rect x="1883.20" y="635.34" width="24.0" height="153.06" fill="#9dc8f7"/><rect x="1912.62" y="632.80" width="24.0" height="155.59" fill="#9dc8f7"/><rect x="1942.04" y="622.68" width="24.0" height="165.71" fill="#9dc8f7"/><rect x="1971.46" y="627.75" width="24.0" height="160.66" fill="#9dc8f7"/><rect x="2000.88" y="630.27" width="24.0" height="158.12" fill="#9dc8f7"/><rect x="2030.30" y="618.89" width="24.0" height="169.51" fill="#9dc8f7"/><rect x="2059.72" y="606.24" width="24.0" height="182.16" fill="#9dc8f7"/><rect x="2089.14" y="622.68" width="24.0" height="165.71" fill="#9dc8f7"/><rect x="2118.56" y="626.48" width="24.0" height="161.92" fill="#9dc8f7"/><rect x="2147.98" y="627.75" width="24.0" height="160.66" fill="#9dc8f7"/><rect x="2177.40" y="627.75" width="24.0" height="160.66" fill="#9dc8f7"/><rect x="2206.82" y="622.68" width="24.0" height="165.71" fill="#9dc8f7"/><rect x="2236.24" y="627.75" width="24.0" height="160.66" fill="#9dc8f7"/><rect x="2265.66" y="626.48" width="24.0" height="161.92" fill="#9dc8f7"/><rect x="2295.08" y="612.57" width="24.0" height="175.83" fill="#9dc8f7"/><rect x="2324.50" y="632.80" width="24.0" height="155.59" fill="#9dc8f7"/><rect x="2353.92" y="627.75" width="24.0" height="160.66" fill="#9dc8f7"/><rect x="2383.34" y="630.27" width="24.0" height="158.12" fill="#9dc8f7"/><rect x="2412.76" y="622.68" width="24.0" height="165.71" fill="#9dc8f7"/><rect x="2442.18" y="615.10" width="24.0" height="173.30" fill="#9dc8f7"/><rect x="2471.60" y="622.68" width="24.0" height="165.71" fill="#9dc8f7"/><rect x="2501.02" y="625.22" width="24.0" height="163.18" fill="#9dc8f7"/><rect x="2530.44" y="622.68" width="24.0" height="165.71" fill="#9dc8f7"/><rect x="2559.86" y="621.42" width="24.0" height="166.98" fill="#9dc8f7"/><rect x="2589.28" y="622.68" width="24.0" height="165.71" fill="#9dc8f7"/><rect x="2618.70" y="616.36" width="24.0" height="172.04" fill="#9dc8f7"/><rect x="2648.12" y="618.89" width="24.0" height="169.51" fill="#9dc8f7"/><rect x="2677.54" y="637.87" width="24.0" height="150.53" fill="#9dc8f7"/><rect x="2706.96" y="625.22" width="24.0" height="163.18" fill="#9dc8f7"/><rect x="2736.38" y="627.75" width="24.0" height="160.66" fill="#9dc8f7"/><rect x="2765.80" y="627.75" width="24.0" height="160.66" fill="#9dc8f7"/><rect x="2795.22" y="621.42" width="24.0" height="166.98" fill="#9dc8f7"/><rect x="2824.64" y="630.27" width="24.0" height="158.12" fill="#9dc8f7"/><rect x="2854.06" y="621.42" width="24.0" height="166.98" fill="#9dc8f7"/><rect x="2854.06" y="621.42" width="24.0" height="166.98" fill="url(#hatch)"/><rect x="412" y="787.40" width="2469" height="2" fill="#5d6469"/><rect x="543.30" y="788.40" width="1.8" height="7" fill="#5d6469"/><rect x="719.80" y="788.40" width="1.8" height="7" fill="#5d6469"/><rect x="896.30" y="788.40" width="1.8" height="7" fill="#5d6469"/><rect x="1072.80" y="788.40" width="1.8" height="7" fill="#5d6469"/><rect x="1249.30" y="788.40" width="1.8" height="7" fill="#5d6469"/><rect x="1425.80" y="788.40" width="1.8" height="7" fill="#5d6469"/><rect x="1602.30" y="788.40" width="1.8" height="7" fill="#5d6469"/><rect x="1778.80" y="788.40" width="1.8" height="7" fill="#5d6469"/><rect x="1955.30" y="788.40" width="1.8" height="7" fill="#5d6469"/><rect x="2131.80" y="788.40" width="1.8" height="7" fill="#5d6469"/><rect x="2308.30" y="788.40" width="1.8" height="7" fill="#5d6469"/><rect x="2484.80" y="788.40" width="1.8" height="7" fill="#5d6469"/><rect x="2661.30" y="788.40" width="1.8" height="7" fill="#5d6469"/><rect x="2837.80" y="788.40" width="1.8" height="7" fill="#5d6469"/></svg>
<span class="t" style="left:396.82px;top:779.00px;font-size:16.5px;line-height:16.5px;color:#1c2b34;-webkit-text-stroke:0.22px #1c2b34;">0</span>
<span class="t" style="left:387.66px;top:716.00px;font-size:16.5px;line-height:16.5px;color:#1c2b34;-webkit-text-stroke:0.22px #1c2b34;">50</span>
<span class="t" style="left:378.50px;top:653.00px;font-size:16.5px;line-height:16.5px;color:#1c2b34;-webkit-text-stroke:0.22px #1c2b34;">100</span>
<span class="t" style="left:378.50px;top:590.00px;font-size:16.5px;line-height:16.5px;color:#1c2b34;-webkit-text-stroke:0.22px #1c2b34;">150</span>
<span class="t" style="left:516.82px;top:799.00px;font-size:16.5px;line-height:16.5px;color:#1c2b34;-webkit-text-stroke:0.22px #1c2b34;transform:scaleX(0.9805);">Wed 19</span>
<span class="t" style="left:699.71px;top:799.00px;font-size:16.5px;line-height:16.5px;color:#1c2b34;-webkit-text-stroke:0.22px #1c2b34;">12:00</span>
<span class="t" style="left:871.87px;top:799.00px;font-size:16.5px;line-height:16.5px;color:#1c2b34;-webkit-text-stroke:0.22px #1c2b34;transform:scaleX(0.9919);">Thu 20</span>
<span class="t" style="left:1052.71px;top:799.00px;font-size:16.5px;line-height:16.5px;color:#1c2b34;-webkit-text-stroke:0.22px #1c2b34;">12:00</span>
<span class="t" style="left:1228.99px;top:799.00px;font-size:16.5px;line-height:16.5px;color:#1c2b34;-webkit-text-stroke:0.22px #1c2b34;transform:scaleX(0.9926);">Fri 21</span>
<span class="t" style="left:1405.71px;top:799.00px;font-size:16.5px;line-height:16.5px;color:#1c2b34;-webkit-text-stroke:0.22px #1c2b34;">12:00</span>
<span class="t" style="left:1579.67px;top:799.00px;font-size:16.5px;line-height:16.5px;color:#1c2b34;-webkit-text-stroke:0.22px #1c2b34;transform:scaleX(0.9888);">Sat 22</span>
<span class="t" style="left:1758.71px;top:799.00px;font-size:16.5px;line-height:16.5px;color:#1c2b34;-webkit-text-stroke:0.22px #1c2b34;">12:00</span>
<span class="t" style="left:1929.36px;top:799.00px;font-size:16.5px;line-height:16.5px;color:#1c2b34;-webkit-text-stroke:0.22px #1c2b34;transform:scaleX(1.0151);">Nov 23</span>
<span class="t" style="left:2111.71px;top:799.00px;font-size:16.5px;line-height:16.5px;color:#1c2b34;-webkit-text-stroke:0.22px #1c2b34;">12:00</span>
<span class="t" style="left:2280.13px;top:799.00px;font-size:16.5px;line-height:16.5px;color:#1c2b34;-webkit-text-stroke:0.22px #1c2b34;transform:scaleX(1.0411);">Mon 24</span>
<span class="t" style="left:2464.71px;top:799.00px;font-size:16.5px;line-height:16.5px;color:#1c2b34;-webkit-text-stroke:0.22px #1c2b34;">12:00</span>
<span class="t" style="left:2637.63px;top:799.00px;font-size:16.5px;line-height:16.5px;color:#1c2b34;-webkit-text-stroke:0.22px #1c2b34;transform:scaleX(0.9749);">Tue 25</span>
<span class="t" style="left:2817.71px;top:799.00px;font-size:16.5px;line-height:16.5px;color:#1c2b34;-webkit-text-stroke:0.22px #1c2b34;">12:00</span>
<div class="a" style="left:395.40px;top:841.80px;width:17.60px;height:17.00px;background:#9dc8f7;border-radius:3px;"></div>
<span class="t" style="left:422.40px;top:841.00px;font-size:18px;line-height:18px;color:#1c2b34;-webkit-text-stroke:0.22px #1c2b34;transform:scaleX(1.0697);">workflow</span>
<div class="a" style="left:310.90px;top:926.00px;width:2605.50px;height:900.00px;background:#fff;border:1.4px solid #e3e5e9;box-sizing:border-box;border-radius:10px;"></div>
<div class="a" style="left:311.60px;top:987.60px;width:2604.10px;height:1.40px;background:#e3e5e9;"></div>
<svg class="a" style="left:325.40px;top:942.20px;" width="28.00" height="28.00" viewBox="0 0 24 24" fill="none"><path d="M5.9 8.4 C5.9 3.2 18.1 3.2 18.1 8.4 V15 C18.1 23.6 5.9 23.6 5.9 15 Z" stroke="#636b70" stroke-width="1.75" stroke-linecap="round" stroke-linejoin="round" fill="none"/><path d="M12 12.4 V21.2 M12 12.4 L6.8 5.8 M12 12.4 L17.2 5.8" stroke="#636b70" stroke-width="1.75" stroke-linecap="round" stroke-linejoin="round" fill="none"/><path d="M9.9 4.2 V1 M14.1 4.2 V1" stroke="#636b70" stroke-width="1.75" stroke-linecap="round" stroke-linejoin="round"/><path d="M6.4 6.6 L2 2.9 M17.6 6.6 L22 2.9 M5.8 12.9 H0.6 M18.2 12.9 H23.4 M7 19 L2 22.9 M17 19 L22 22.9" stroke="#636b70" stroke-width="1.75" stroke-linecap="round" stroke-linejoin="round"/></svg>
<span class="t" style="left:365.46px;top:946.00px;font-size:25.5px;line-height:25.5px;color:#1c2b34;-webkit-text-stroke:0.22px #1c2b34;">Errors</span>
<svg class="a" style="left:2878.60px;top:947.60px;" width="20.00" height="20.00" viewBox="0 0 24 24" fill="none"><path d="M3 7.4 L12 16.4 L21 7.4" stroke="#636b70" stroke-width="2.9" stroke-linecap="round" stroke-linejoin="round" fill="none"/></svg>
<span class="t" style="left:331.70px;top:1021.00px;font-size:24px;line-height:24px;color:#1c2b34;-webkit-text-stroke:0.22px #1c2b34;transform:scaleX(1.0379);">All Errors by Error Type</span>
<svg class="a" style="left:2862.30px;top:1018.60px;" width="21.50" height="23.20" viewBox="0 0 21.5 23.2" fill="none"><path d="M10.7 15 V1.6 M4.5 7.9 L10.7 1.3 L16.9 7.9" stroke="#636b70" stroke-width="1.9" fill="none" stroke-linecap="butt" stroke-linejoin="miter"/><path d="M1.2 13.4 V22.2 H20.3 V13.4" stroke="#636b70" stroke-width="1.9" fill="none" stroke-linecap="butt" stroke-linejoin="miter"/></svg>
<svg class="a" style="left:0;top:0" width="2942" height="1712" viewBox="0 0 2942 1712"><defs><pattern id="hatch2" width="7.2" height="7.2" patternUnits="userSpaceOnUse" patternTransform="rotate(45)"><rect x="0" y="0" width="2.6" height="7.2" fill="rgba(255,255,255,0.27)"/></pattern></defs><rect x="397.5" y="1410.83" width="2497.5" height="1.8" fill="#ececec"/><rect x="397.5" y="1367.76" width="2497.5" height="1.8" fill="#ececec"/><rect x="397.5" y="1324.69" width="2497.5" height="1.8" fill="#ececec"/><rect x="397.5" y="1281.62" width="2497.5" height="1.8" fill="#ececec"/><rect x="397.5" y="1238.55" width="2497.5" height="1.8" fill="#ececec"/><rect x="397.5" y="1195.48" width="2497.5" height="1.8" fill="#ececec"/><rect x="397.5" y="1152.41" width="2497.5" height="1.8" fill="#ececec"/><rect x="397.5" y="1109.34" width="2497.5" height="1.8" fill="#ececec"/><rect x="397.5" y="1066.27" width="2497.5" height="1.8" fill="#ececec"/><rect x="398.30" y="1402.42" width="24.3" height="52.08" fill="#f6cc45"/><rect x="398.30" y="1385.19" width="24.3" height="17.63" fill="#6c5cd9"/><rect x="398.30" y="1376.57" width="24.3" height="9.01" fill="#d3bdf6"/><rect x="398.30" y="1355.04" width="24.3" height="21.94" fill="#4f93e0"/><rect x="398.30" y="1290.43" width="24.3" height="65.01" fill="#9dc8f7"/><rect x="428.04" y="1449.79" width="24.3" height="4.71" fill="#6c5cd9"/><rect x="428.04" y="1432.56" width="24.3" height="17.63" fill="#d3bdf6"/><rect x="428.04" y="1406.72" width="24.3" height="26.24" fill="#4f93e0"/><rect x="428.04" y="1346.42" width="24.3" height="60.70" fill="#9dc8f7"/><rect x="457.78" y="1436.87" width="24.3" height="17.63" fill="#f6cc45"/><rect x="457.78" y="1428.26" width="24.3" height="9.01" fill="#6c5cd9"/><rect x="457.78" y="1402.42" width="24.3" height="26.24" fill="#d3bdf6"/><rect x="457.78" y="1389.49" width="24.3" height="13.32" fill="#4f93e0"/><rect x="457.78" y="1286.13" width="24.3" height="103.77" fill="#9dc8f7"/><rect x="487.52" y="1419.64" width="24.3" height="34.86" fill="#f6cc45"/><rect x="487.52" y="1411.03" width="24.3" height="9.01" fill="#6c5cd9"/><rect x="487.52" y="1402.42" width="24.3" height="9.01" fill="#d3bdf6"/><rect x="487.52" y="1398.11" width="24.3" height="4.71" fill="#4f93e0"/><rect x="487.52" y="1333.50" width="24.3" height="65.01" fill="#9dc8f7"/><rect x="517.26" y="1402.42" width="24.3" height="52.08" fill="#f6cc45"/><rect x="517.26" y="1389.49" width="24.3" height="13.32" fill="#6c5cd9"/><rect x="517.26" y="1376.57" width="24.3" height="13.32" fill="#d3bdf6"/><rect x="517.26" y="1359.35" width="24.3" height="17.63" fill="#4f93e0"/><rect x="517.26" y="1251.67" width="24.3" height="108.08" fill="#9dc8f7"/><rect x="547.00" y="1441.18" width="24.3" height="13.32" fill="#6c5cd9"/><rect x="547.00" y="1419.64" width="24.3" height="21.94" fill="#d3bdf6"/><rect x="547.00" y="1402.42" width="24.3" height="17.63" fill="#4f93e0"/><rect x="547.00" y="1307.66" width="24.3" height="95.15" fill="#9dc8f7"/><rect x="576.74" y="1402.42" width="24.3" height="52.08" fill="#f6cc45"/><rect x="576.74" y="1389.49" width="24.3" height="13.32" fill="#d3bdf6"/><rect x="576.74" y="1385.19" width="24.3" height="4.71" fill="#4f93e0"/><rect x="576.74" y="1333.50" width="24.3" height="52.08" fill="#9dc8f7"/><rect x="606.48" y="1436.87" width="24.3" height="17.63" fill="#f6cc45"/><rect x="606.48" y="1432.56" width="24.3" height="4.71" fill="#6c5cd9"/><rect x="606.48" y="1428.26" width="24.3" height="4.71" fill="#d3bdf6"/><rect x="606.48" y="1411.03" width="24.3" height="17.63" fill="#4f93e0"/><rect x="606.48" y="1372.27" width="24.3" height="39.16" fill="#9dc8f7"/><rect x="636.22" y="1419.64" width="24.3" height="34.86" fill="#f6cc45"/><rect x="636.22" y="1402.42" width="24.3" height="17.63" fill="#6c5cd9"/><rect x="636.22" y="1389.49" width="24.3" height="13.32" fill="#d3bdf6"/><rect x="636.22" y="1367.96" width="24.3" height="21.94" fill="#4f93e0"/><rect x="636.22" y="1294.74" width="24.3" height="73.62" fill="#9dc8f7"/><rect x="665.96" y="1402.42" width="24.3" height="52.08" fill="#f6cc45"/><rect x="665.96" y="1389.49" width="24.3" height="13.32" fill="#6c5cd9"/><rect x="665.96" y="1385.19" width="24.3" height="4.71" fill="#4f93e0"/><rect x="665.96" y="1316.28" width="24.3" height="69.31" fill="#9dc8f7"/><rect x="695.70" y="1419.64" width="24.3" height="34.86" fill="#f6cc45"/><rect x="695.70" y="1415.34" width="24.3" height="4.71" fill="#6c5cd9"/><rect x="695.70" y="1406.72" width="24.3" height="9.01" fill="#d3bdf6"/><rect x="695.70" y="1385.19" width="24.3" height="21.94" fill="#4f93e0"/><rect x="695.70" y="1311.97" width="24.3" height="73.62" fill="#9dc8f7"/><rect x="725.44" y="1436.87" width="24.3" height="17.63" fill="#f6cc45"/><rect x="725.44" y="1419.64" width="24.3" height="17.63" fill="#d3bdf6"/><rect x="725.44" y="1406.72" width="24.3" height="13.32" fill="#4f93e0"/><rect x="725.44" y="1346.42" width="24.3" height="60.70" fill="#9dc8f7"/><rect x="755.18" y="1385.19" width="24.3" height="69.31" fill="#f6cc45"/><rect x="755.18" y="1376.57" width="24.3" height="9.01" fill="#6c5cd9"/><rect x="755.18" y="1367.96" width="24.3" height="9.01" fill="#d3bdf6"/><rect x="755.18" y="1329.20" width="24.3" height="39.16" fill="#4f93e0"/><rect x="755.18" y="1277.51" width="24.3" height="52.08" fill="#9dc8f7"/><rect x="784.92" y="1436.87" width="24.3" height="17.63" fill="#f6cc45"/><rect x="784.92" y="1432.56" width="24.3" height="4.71" fill="#6c5cd9"/><rect x="784.92" y="1419.64" width="24.3" height="13.32" fill="#d3bdf6"/><rect x="784.92" y="1367.96" width="24.3" height="52.08" fill="#4f93e0"/><rect x="784.92" y="1303.35" width="24.3" height="65.01" fill="#9dc8f7"/><rect x="814.66" y="1441.18" width="24.3" height="13.32" fill="#6c5cd9"/><rect x="814.66" y="1436.87" width="24.3" height="4.71" fill="#d3bdf6"/><rect x="814.66" y="1406.72" width="24.3" height="30.55" fill="#4f93e0"/><rect x="814.66" y="1342.12" width="24.3" height="65.01" fill="#9dc8f7"/><rect x="844.40" y="1385.19" width="24.3" height="69.31" fill="#f6cc45"/><rect x="844.40" y="1367.96" width="24.3" height="17.63" fill="#6c5cd9"/><rect x="844.40" y="1355.04" width="24.3" height="13.32" fill="#d3bdf6"/><rect x="844.40" y="1342.12" width="24.3" height="13.32" fill="#4f93e0"/><rect x="844.40" y="1264.59" width="24.3" height="77.93" fill="#9dc8f7"/><rect x="874.14" y="1436.87" width="24.3" height="17.63" fill="#f6cc45"/><rect x="874.14" y="1415.34" width="24.3" height="21.94" fill="#6c5cd9"/><rect x="874.14" y="1402.42" width="24.3" height="13.32" fill="#d3bdf6"/><rect x="874.14" y="1393.80" width="24.3" height="9.01" fill="#4f93e0"/><rect x="874.14" y="1355.04" width="24.3" height="39.16" fill="#9dc8f7"/><rect x="903.88" y="1419.64" width="24.3" height="34.86" fill="#f6cc45"/><rect x="903.88" y="1415.34" width="24.3" height="4.71" fill="#6c5cd9"/><rect x="903.88" y="1402.42" width="24.3" height="13.32" fill="#d3bdf6"/><rect x="903.88" y="1389.49" width="24.3" height="13.32" fill="#4f93e0"/><rect x="903.88" y="1350.73" width="24.3" height="39.16" fill="#9dc8f7"/><rect x="933.62" y="1419.64" width="24.3" height="34.86" fill="#f6cc45"/><rect x="933.62" y="1406.72" width="24.3" height="13.32" fill="#6c5cd9"/><rect x="933.62" y="1385.19" width="24.3" height="21.94" fill="#d3bdf6"/><rect x="933.62" y="1372.27" width="24.3" height="13.32" fill="#4f93e0"/><rect x="933.62" y="1316.28" width="24.3" height="56.39" fill="#9dc8f7"/><rect x="963.36" y="1436.87" width="24.3" height="17.63" fill="#f6cc45"/><rect x="963.36" y="1428.26" width="24.3" height="9.01" fill="#6c5cd9"/><rect x="963.36" y="1419.64" width="24.3" height="9.01" fill="#d3bdf6"/><rect x="963.36" y="1385.19" width="24.3" height="34.86" fill="#4f93e0"/><rect x="963.36" y="1320.58" width="24.3" height="65.01" fill="#9dc8f7"/><rect x="993.10" y="1436.87" width="24.3" height="17.63" fill="#f6cc45"/><rect x="993.10" y="1432.56" width="24.3" height="4.71" fill="#6c5cd9"/><rect x="993.10" y="1419.64" width="24.3" height="13.32" fill="#d3bdf6"/><rect x="993.10" y="1411.03" width="24.3" height="9.01" fill="#4f93e0"/><rect x="993.10" y="1350.73" width="24.3" height="60.70" fill="#9dc8f7"/><rect x="1022.84" y="1436.87" width="24.3" height="17.63" fill="#f6cc45"/><rect x="1022.84" y="1428.26" width="24.3" height="9.01" fill="#6c5cd9"/><rect x="1022.84" y="1411.03" width="24.3" height="17.63" fill="#d3bdf6"/><rect x="1022.84" y="1398.11" width="24.3" height="13.32" fill="#4f93e0"/><rect x="1022.84" y="1303.35" width="24.3" height="95.15" fill="#9dc8f7"/><rect x="1052.58" y="1385.19" width="24.3" height="69.31" fill="#f6cc45"/><rect x="1052.58" y="1376.57" width="24.3" height="9.01" fill="#6c5cd9"/><rect x="1052.58" y="1372.27" width="24.3" height="4.71" fill="#d3bdf6"/><rect x="1052.58" y="1342.12" width="24.3" height="30.55" fill="#4f93e0"/><rect x="1052.58" y="1299.05" width="24.3" height="43.47" fill="#9dc8f7"/><rect x="1082.32" y="1402.42" width="24.3" height="52.08" fill="#f6cc45"/><rect x="1082.32" y="1376.57" width="24.3" height="26.24" fill="#6c5cd9"/><rect x="1082.32" y="1363.65" width="24.3" height="13.32" fill="#d3bdf6"/><rect x="1082.32" y="1337.81" width="24.3" height="26.24" fill="#4f93e0"/><rect x="1082.32" y="1277.51" width="24.3" height="60.70" fill="#9dc8f7"/><rect x="1112.06" y="1419.64" width="24.3" height="34.86" fill="#f6cc45"/><rect x="1112.06" y="1406.72" width="24.3" height="13.32" fill="#6c5cd9"/><rect x="1112.06" y="1402.42" width="24.3" height="4.71" fill="#d3bdf6"/><rect x="1112.06" y="1346.42" width="24.3" height="56.39" fill="#4f93e0"/><rect x="1112.06" y="1251.67" width="24.3" height="95.15" fill="#9dc8f7"/><rect x="1141.80" y="1445.49" width="24.3" height="9.01" fill="#6c5cd9"/><rect x="1141.80" y="1419.64" width="24.3" height="26.24" fill="#d3bdf6"/><rect x="1141.80" y="1406.72" width="24.3" height="13.32" fill="#4f93e0"/><rect x="1141.80" y="1303.35" width="24.3" height="103.77" fill="#9dc8f7"/><rect x="1171.54" y="1419.64" width="24.3" height="34.86" fill="#f6cc45"/><rect x="1171.54" y="1398.11" width="24.3" height="21.94" fill="#6c5cd9"/><rect x="1171.54" y="1393.80" width="24.3" height="4.71" fill="#d3bdf6"/><rect x="1171.54" y="1359.35" width="24.3" height="34.86" fill="#4f93e0"/><rect x="1171.54" y="1286.13" width="24.3" height="73.62" fill="#9dc8f7"/><rect x="1201.28" y="1402.42" width="24.3" height="52.08" fill="#f6cc45"/><rect x="1201.28" y="1389.49" width="24.3" height="13.32" fill="#6c5cd9"/><rect x="1201.28" y="1385.19" width="24.3" height="4.71" fill="#d3bdf6"/><rect x="1201.28" y="1342.12" width="24.3" height="43.47" fill="#4f93e0"/><rect x="1201.28" y="1243.06" width="24.3" height="99.46" fill="#9dc8f7"/><rect x="1231.02" y="1402.42" width="24.3" height="52.08" fill="#f6cc45"/><rect x="1231.02" y="1380.88" width="24.3" height="21.94" fill="#6c5cd9"/><rect x="1231.02" y="1376.57" width="24.3" height="4.71" fill="#d3bdf6"/><rect x="1231.02" y="1363.65" width="24.3" height="13.32" fill="#4f93e0"/><rect x="1231.02" y="1243.06" width="24.3" height="121.00" fill="#9dc8f7"/><rect x="1260.76" y="1385.19" width="24.3" height="69.31" fill="#f6cc45"/><rect x="1260.76" y="1372.27" width="24.3" height="13.32" fill="#6c5cd9"/><rect x="1260.76" y="1367.96" width="24.3" height="4.71" fill="#d3bdf6"/><rect x="1260.76" y="1320.58" width="24.3" height="47.78" fill="#4f93e0"/><rect x="1260.76" y="1243.06" width="24.3" height="77.93" fill="#9dc8f7"/><rect x="1290.50" y="1436.87" width="24.3" height="17.63" fill="#f6cc45"/><rect x="1290.50" y="1419.64" width="24.3" height="17.63" fill="#6c5cd9"/><rect x="1290.50" y="1411.03" width="24.3" height="9.01" fill="#d3bdf6"/><rect x="1290.50" y="1372.27" width="24.3" height="39.16" fill="#4f93e0"/><rect x="1290.50" y="1316.28" width="24.3" height="56.39" fill="#9dc8f7"/><rect x="1320.24" y="1385.19" width="24.3" height="69.31" fill="#f6cc45"/><rect x="1320.24" y="1372.27" width="24.3" height="13.32" fill="#6c5cd9"/><rect x="1320.24" y="1367.96" width="24.3" height="4.71" fill="#d3bdf6"/><rect x="1320.24" y="1337.81" width="24.3" height="30.55" fill="#4f93e0"/><rect x="1320.24" y="1187.07" width="24.3" height="151.15" fill="#9dc8f7"/><rect x="1349.98" y="1436.87" width="24.3" height="17.63" fill="#6c5cd9"/><rect x="1349.98" y="1428.26" width="24.3" height="9.01" fill="#d3bdf6"/><rect x="1349.98" y="1389.49" width="24.3" height="39.16" fill="#4f93e0"/><rect x="1349.98" y="1303.35" width="24.3" height="86.54" fill="#9dc8f7"/><rect x="1379.72" y="1419.64" width="24.3" height="34.86" fill="#f6cc45"/><rect x="1379.72" y="1411.03" width="24.3" height="9.01" fill="#6c5cd9"/><rect x="1379.72" y="1393.80" width="24.3" height="17.63" fill="#d3bdf6"/><rect x="1379.72" y="1359.35" width="24.3" height="34.86" fill="#4f93e0"/><rect x="1379.72" y="1286.13" width="24.3" height="73.62" fill="#9dc8f7"/><rect x="1409.46" y="1367.96" width="24.3" height="86.54" fill="#f6cc45"/><rect x="1409.46" y="1359.35" width="24.3" height="9.01" fill="#6c5cd9"/><rect x="1409.46" y="1355.04" width="24.3" height="4.71" fill="#d3bdf6"/><rect x="1409.46" y="1324.89" width="24.3" height="30.55" fill="#4f93e0"/><rect x="1409.46" y="1182.76" width="24.3" height="142.53" fill="#9dc8f7"/><rect x="1439.20" y="1350.73" width="24.3" height="103.77" fill="#f6cc45"/><rect x="1439.20" y="1337.81" width="24.3" height="13.32" fill="#6c5cd9"/><rect x="1439.20" y="1333.50" width="24.3" height="4.71" fill="#d3bdf6"/><rect x="1439.20" y="1303.35" width="24.3" height="30.55" fill="#4f93e0"/><rect x="1439.20" y="1161.22" width="24.3" height="142.53" fill="#9dc8f7"/><rect x="1468.94" y="1402.42" width="24.3" height="52.08" fill="#f6cc45"/><rect x="1468.94" y="1393.80" width="24.3" height="9.01" fill="#6c5cd9"/><rect x="1468.94" y="1385.19" width="24.3" height="9.01" fill="#d3bdf6"/><rect x="1468.94" y="1337.81" width="24.3" height="47.78" fill="#4f93e0"/><rect x="1468.94" y="1225.83" width="24.3" height="112.38" fill="#9dc8f7"/><rect x="1498.68" y="1436.87" width="24.3" height="17.63" fill="#f6cc45"/><rect x="1498.68" y="1406.72" width="24.3" height="30.55" fill="#6c5cd9"/><rect x="1498.68" y="1402.42" width="24.3" height="4.71" fill="#d3bdf6"/><rect x="1498.68" y="1389.49" width="24.3" height="13.32" fill="#4f93e0"/><rect x="1498.68" y="1277.51" width="24.3" height="112.38" fill="#9dc8f7"/><rect x="1528.42" y="1436.87" width="24.3" height="17.63" fill="#f6cc45"/><rect x="1528.42" y="1419.64" width="24.3" height="17.63" fill="#6c5cd9"/><rect x="1528.42" y="1406.72" width="24.3" height="13.32" fill="#d3bdf6"/><rect x="1528.42" y="1359.35" width="24.3" height="47.78" fill="#4f93e0"/><rect x="1528.42" y="1268.90" width="24.3" height="90.85" fill="#9dc8f7"/><rect x="1558.16" y="1419.64" width="24.3" height="34.86" fill="#f6cc45"/><rect x="1558.16" y="1411.03" width="24.3" height="9.01" fill="#6c5cd9"/><rect x="1558.16" y="1398.11" width="24.3" height="13.32" fill="#d3bdf6"/><rect x="1558.16" y="1372.27" width="24.3" height="26.24" fill="#4f93e0"/><rect x="1558.16" y="1324.89" width="24.3" height="47.78" fill="#9dc8f7"/><rect x="1587.90" y="1419.64" width="24.3" height="34.86" fill="#f6cc45"/><rect x="1587.90" y="1398.11" width="24.3" height="21.94" fill="#6c5cd9"/><rect x="1587.90" y="1380.88" width="24.3" height="17.63" fill="#d3bdf6"/><rect x="1587.90" y="1333.50" width="24.3" height="47.78" fill="#4f93e0"/><rect x="1587.90" y="1273.21" width="24.3" height="60.70" fill="#9dc8f7"/><rect x="1617.64" y="1385.19" width="24.3" height="69.31" fill="#f6cc45"/><rect x="1617.64" y="1363.65" width="24.3" height="21.94" fill="#6c5cd9"/><rect x="1617.64" y="1359.35" width="24.3" height="4.71" fill="#d3bdf6"/><rect x="1617.64" y="1333.50" width="24.3" height="26.24" fill="#4f93e0"/><rect x="1617.64" y="1268.90" width="24.3" height="65.01" fill="#9dc8f7"/><rect x="1647.38" y="1419.64" width="24.3" height="34.86" fill="#f6cc45"/><rect x="1647.38" y="1402.42" width="24.3" height="17.63" fill="#6c5cd9"/><rect x="1647.38" y="1389.49" width="24.3" height="13.32" fill="#d3bdf6"/><rect x="1647.38" y="1260.28" width="24.3" height="129.61" fill="#9dc8f7"/><rect x="1677.12" y="1385.19" width="24.3" height="69.31" fill="#f6cc45"/><rect x="1677.12" y="1376.57" width="24.3" height="9.01" fill="#6c5cd9"/><rect x="1677.12" y="1367.96" width="24.3" height="9.01" fill="#d3bdf6"/><rect x="1677.12" y="1359.35" width="24.3" height="9.01" fill="#4f93e0"/><rect x="1677.12" y="1273.21" width="24.3" height="86.54" fill="#9dc8f7"/><rect x="1706.86" y="1436.87" width="24.3" height="17.63" fill="#f6cc45"/><rect x="1706.86" y="1432.56" width="24.3" height="4.71" fill="#6c5cd9"/><rect x="1706.86" y="1415.34" width="24.3" height="17.63" fill="#d3bdf6"/><rect x="1706.86" y="1398.11" width="24.3" height="17.63" fill="#4f93e0"/><rect x="1706.86" y="1311.97" width="24.3" height="86.54" fill="#9dc8f7"/><rect x="1736.60" y="1402.42" width="24.3" height="52.08" fill="#f6cc45"/><rect x="1736.60" y="1393.80" width="24.3" height="9.01" fill="#6c5cd9"/><rect x="1736.60" y="1385.19" width="24.3" height="9.01" fill="#d3bdf6"/><rect x="1736.60" y="1380.88" width="24.3" height="4.71" fill="#4f93e0"/><rect x="1736.60" y="1299.05" width="24.3" height="82.23" fill="#9dc8f7"/><rect x="1766.34" y="1445.49" width="24.3" height="9.01" fill="#d3bdf6"/><rect x="1766.34" y="1436.87" width="24.3" height="9.01" fill="#4f93e0"/><rect x="1766.34" y="1376.57" width="24.3" height="60.70" fill="#9dc8f7"/><rect x="1796.08" y="1419.64" width="24.3" height="34.86" fill="#f6cc45"/><rect x="1796.08" y="1411.03" width="24.3" height="9.01" fill="#6c5cd9"/><rect x="1796.08" y="1389.49" width="24.3" height="21.94" fill="#4f93e0"/><rect x="1796.08" y="1311.97" width="24.3" height="77.93" fill="#9dc8f7"/><rect x="1825.82" y="1436.87" width="24.3" height="17.63" fill="#f6cc45"/><rect x="1825.82" y="1423.95" width="24.3" height="13.32" fill="#6c5cd9"/><rect x="1825.82" y="1419.64" width="24.3" height="4.71" fill="#d3bdf6"/><rect x="1825.82" y="1385.19" width="24.3" height="34.86" fill="#4f93e0"/><rect x="1825.82" y="1264.59" width="24.3" height="121.00" fill="#9dc8f7"/><rect x="1855.56" y="1385.19" width="24.3" height="69.31" fill="#f6cc45"/><rect x="1855.56" y="1380.88" width="24.3" height="4.71" fill="#6c5cd9"/><rect x="1855.56" y="1367.96" width="24.3" height="13.32" fill="#d3bdf6"/><rect x="1855.56" y="1324.89" width="24.3" height="43.47" fill="#4f93e0"/><rect x="1855.56" y="1281.82" width="24.3" height="43.47" fill="#9dc8f7"/><rect x="1885.30" y="1402.42" width="24.3" height="52.08" fill="#f6cc45"/><rect x="1885.30" y="1385.19" width="24.3" height="17.63" fill="#6c5cd9"/><rect x="1885.30" y="1376.57" width="24.3" height="9.01" fill="#d3bdf6"/><rect x="1885.30" y="1333.50" width="24.3" height="43.47" fill="#4f93e0"/><rect x="1885.30" y="1286.13" width="24.3" height="47.78" fill="#9dc8f7"/><rect x="1915.04" y="1402.42" width="24.3" height="52.08" fill="#f6cc45"/><rect x="1915.04" y="1393.80" width="24.3" height="9.01" fill="#d3bdf6"/><rect x="1915.04" y="1355.04" width="24.3" height="39.16" fill="#4f93e0"/><rect x="1915.04" y="1299.05" width="24.3" height="56.39" fill="#9dc8f7"/><rect x="1944.78" y="1436.87" width="24.3" height="17.63" fill="#f6cc45"/><rect x="1944.78" y="1419.64" width="24.3" height="17.63" fill="#6c5cd9"/><rect x="1944.78" y="1402.42" width="24.3" height="17.63" fill="#d3bdf6"/><rect x="1944.78" y="1385.19" width="24.3" height="17.63" fill="#4f93e0"/><rect x="1944.78" y="1243.06" width="24.3" height="142.53" fill="#9dc8f7"/><rect x="1974.52" y="1402.42" width="24.3" height="52.08" fill="#f6cc45"/><rect x="1974.52" y="1385.19" width="24.3" height="17.63" fill="#6c5cd9"/><rect x="1974.52" y="1380.88" width="24.3" height="4.71" fill="#d3bdf6"/><rect x="1974.52" y="1346.42" width="24.3" height="34.86" fill="#4f93e0"/><rect x="1974.52" y="1290.43" width="24.3" height="56.39" fill="#9dc8f7"/><rect x="2004.26" y="1419.64" width="24.3" height="34.86" fill="#f6cc45"/><rect x="2004.26" y="1402.42" width="24.3" height="17.63" fill="#6c5cd9"/><rect x="2004.26" y="1398.11" width="24.3" height="4.71" fill="#d3bdf6"/><rect x="2004.26" y="1346.42" width="24.3" height="52.08" fill="#4f93e0"/><rect x="2004.26" y="1273.21" width="24.3" height="73.62" fill="#9dc8f7"/><rect x="2034.00" y="1385.19" width="24.3" height="69.31" fill="#f6cc45"/><rect x="2034.00" y="1376.57" width="24.3" height="9.01" fill="#6c5cd9"/><rect x="2034.00" y="1333.50" width="24.3" height="43.47" fill="#4f93e0"/><rect x="2034.00" y="1187.07" width="24.3" height="146.84" fill="#9dc8f7"/><rect x="2063.74" y="1419.64" width="24.3" height="34.86" fill="#f6cc45"/><rect x="2063.74" y="1393.80" width="24.3" height="26.24" fill="#6c5cd9"/><rect x="2063.74" y="1359.35" width="24.3" height="34.86" fill="#4f93e0"/><rect x="2063.74" y="1234.44" width="24.3" height="125.30" fill="#9dc8f7"/><rect x="2093.48" y="1436.87" width="24.3" height="17.63" fill="#f6cc45"/><rect x="2093.48" y="1419.64" width="24.3" height="17.63" fill="#6c5cd9"/><rect x="2093.48" y="1411.03" width="24.3" height="9.01" fill="#d3bdf6"/><rect x="2093.48" y="1385.19" width="24.3" height="26.24" fill="#4f93e0"/><rect x="2093.48" y="1286.13" width="24.3" height="99.46" fill="#9dc8f7"/><rect x="2123.22" y="1402.42" width="24.3" height="52.08" fill="#f6cc45"/><rect x="2123.22" y="1393.80" width="24.3" height="9.01" fill="#6c5cd9"/><rect x="2123.22" y="1372.27" width="24.3" height="21.94" fill="#d3bdf6"/><rect x="2123.22" y="1355.04" width="24.3" height="17.63" fill="#4f93e0"/><rect x="2123.22" y="1264.59" width="24.3" height="90.85" fill="#9dc8f7"/><rect x="2152.96" y="1419.64" width="24.3" height="34.86" fill="#f6cc45"/><rect x="2152.96" y="1406.72" width="24.3" height="13.32" fill="#6c5cd9"/><rect x="2152.96" y="1398.11" width="24.3" height="9.01" fill="#d3bdf6"/><rect x="2152.96" y="1376.57" width="24.3" height="21.94" fill="#4f93e0"/><rect x="2152.96" y="1346.42" width="24.3" height="30.55" fill="#9dc8f7"/><rect x="2182.70" y="1436.87" width="24.3" height="17.63" fill="#f6cc45"/><rect x="2182.70" y="1423.95" width="24.3" height="13.32" fill="#6c5cd9"/><rect x="2182.70" y="1419.64" width="24.3" height="4.71" fill="#d3bdf6"/><rect x="2182.70" y="1389.49" width="24.3" height="30.55" fill="#4f93e0"/><rect x="2182.70" y="1333.50" width="24.3" height="56.39" fill="#9dc8f7"/><rect x="2212.44" y="1419.64" width="24.3" height="34.86" fill="#f6cc45"/><rect x="2212.44" y="1406.72" width="24.3" height="13.32" fill="#6c5cd9"/><rect x="2212.44" y="1398.11" width="24.3" height="9.01" fill="#d3bdf6"/><rect x="2212.44" y="1372.27" width="24.3" height="26.24" fill="#4f93e0"/><rect x="2212.44" y="1264.59" width="24.3" height="108.08" fill="#9dc8f7"/><rect x="2242.18" y="1449.79" width="24.3" height="4.71" fill="#6c5cd9"/><rect x="2242.18" y="1436.87" width="24.3" height="13.32" fill="#d3bdf6"/><rect x="2242.18" y="1389.49" width="24.3" height="47.78" fill="#4f93e0"/><rect x="2242.18" y="1329.20" width="24.3" height="60.70" fill="#9dc8f7"/><rect x="2271.92" y="1402.42" width="24.3" height="52.08" fill="#f6cc45"/><rect x="2271.92" y="1389.49" width="24.3" height="13.32" fill="#6c5cd9"/><rect x="2271.92" y="1385.19" width="24.3" height="4.71" fill="#d3bdf6"/><rect x="2271.92" y="1342.12" width="24.3" height="43.47" fill="#4f93e0"/><rect x="2271.92" y="1230.14" width="24.3" height="112.38" fill="#9dc8f7"/><rect x="2301.66" y="1402.42" width="24.3" height="52.08" fill="#f6cc45"/><rect x="2301.66" y="1389.49" width="24.3" height="13.32" fill="#6c5cd9"/><rect x="2301.66" y="1367.96" width="24.3" height="21.94" fill="#4f93e0"/><rect x="2301.66" y="1260.28" width="24.3" height="108.08" fill="#9dc8f7"/><rect x="2331.40" y="1419.64" width="24.3" height="34.86" fill="#f6cc45"/><rect x="2331.40" y="1411.03" width="24.3" height="9.01" fill="#6c5cd9"/><rect x="2331.40" y="1398.11" width="24.3" height="13.32" fill="#d3bdf6"/><rect x="2331.40" y="1372.27" width="24.3" height="26.24" fill="#4f93e0"/><rect x="2331.40" y="1277.51" width="24.3" height="95.15" fill="#9dc8f7"/><rect x="2361.14" y="1402.42" width="24.3" height="52.08" fill="#f6cc45"/><rect x="2361.14" y="1393.80" width="24.3" height="9.01" fill="#6c5cd9"/><rect x="2361.14" y="1376.57" width="24.3" height="17.63" fill="#d3bdf6"/><rect x="2361.14" y="1367.96" width="24.3" height="9.01" fill="#4f93e0"/><rect x="2361.14" y="1255.98" width="24.3" height="112.38" fill="#9dc8f7"/><rect x="2390.88" y="1402.42" width="24.3" height="52.08" fill="#f6cc45"/><rect x="2390.88" y="1389.49" width="24.3" height="13.32" fill="#6c5cd9"/><rect x="2390.88" y="1380.88" width="24.3" height="9.01" fill="#d3bdf6"/><rect x="2390.88" y="1372.27" width="24.3" height="9.01" fill="#4f93e0"/><rect x="2390.88" y="1299.05" width="24.3" height="73.62" fill="#9dc8f7"/><rect x="2420.62" y="1402.42" width="24.3" height="52.08" fill="#f6cc45"/><rect x="2420.62" y="1389.49" width="24.3" height="13.32" fill="#6c5cd9"/><rect x="2420.62" y="1376.57" width="24.3" height="13.32" fill="#d3bdf6"/><rect x="2420.62" y="1333.50" width="24.3" height="43.47" fill="#4f93e0"/><rect x="2420.62" y="1230.14" width="24.3" height="103.77" fill="#9dc8f7"/><rect x="2450.36" y="1432.56" width="24.3" height="21.94" fill="#6c5cd9"/><rect x="2450.36" y="1428.26" width="24.3" height="4.71" fill="#d3bdf6"/><rect x="2450.36" y="1402.42" width="24.3" height="26.24" fill="#4f93e0"/><rect x="2450.36" y="1333.50" width="24.3" height="69.31" fill="#9dc8f7"/><rect x="2480.10" y="1419.64" width="24.3" height="34.86" fill="#f6cc45"/><rect x="2480.10" y="1411.03" width="24.3" height="9.01" fill="#6c5cd9"/><rect x="2480.10" y="1389.49" width="24.3" height="21.94" fill="#4f93e0"/><rect x="2480.10" y="1299.05" width="24.3" height="90.85" fill="#9dc8f7"/><rect x="2509.84" y="1402.42" width="24.3" height="52.08" fill="#f6cc45"/><rect x="2509.84" y="1376.57" width="24.3" height="26.24" fill="#6c5cd9"/><rect x="2509.84" y="1363.65" width="24.3" height="13.32" fill="#d3bdf6"/><rect x="2509.84" y="1316.28" width="24.3" height="47.78" fill="#4f93e0"/><rect x="2509.84" y="1230.14" width="24.3" height="86.54" fill="#9dc8f7"/><rect x="2539.58" y="1436.87" width="24.3" height="17.63" fill="#f6cc45"/><rect x="2539.58" y="1415.34" width="24.3" height="21.94" fill="#6c5cd9"/><rect x="2539.58" y="1411.03" width="24.3" height="4.71" fill="#d3bdf6"/><rect x="2539.58" y="1398.11" width="24.3" height="13.32" fill="#4f93e0"/><rect x="2539.58" y="1316.28" width="24.3" height="82.23" fill="#9dc8f7"/><rect x="2569.32" y="1436.87" width="24.3" height="17.63" fill="#f6cc45"/><rect x="2569.32" y="1428.26" width="24.3" height="9.01" fill="#6c5cd9"/><rect x="2569.32" y="1398.11" width="24.3" height="30.55" fill="#4f93e0"/><rect x="2569.32" y="1311.97" width="24.3" height="86.54" fill="#9dc8f7"/><rect x="2599.06" y="1436.87" width="24.3" height="17.63" fill="#f6cc45"/><rect x="2599.06" y="1419.64" width="24.3" height="17.63" fill="#6c5cd9"/><rect x="2599.06" y="1411.03" width="24.3" height="9.01" fill="#d3bdf6"/><rect x="2599.06" y="1385.19" width="24.3" height="26.24" fill="#4f93e0"/><rect x="2599.06" y="1290.43" width="24.3" height="95.15" fill="#9dc8f7"/><rect x="2628.80" y="1436.87" width="24.3" height="17.63" fill="#f6cc45"/><rect x="2628.80" y="1419.64" width="24.3" height="17.63" fill="#6c5cd9"/><rect x="2628.80" y="1406.72" width="24.3" height="13.32" fill="#d3bdf6"/><rect x="2628.80" y="1389.49" width="24.3" height="17.63" fill="#4f93e0"/><rect x="2628.80" y="1307.66" width="24.3" height="82.23" fill="#9dc8f7"/><rect x="2658.54" y="1419.64" width="24.3" height="34.86" fill="#f6cc45"/><rect x="2658.54" y="1406.72" width="24.3" height="13.32" fill="#6c5cd9"/><rect x="2658.54" y="1393.80" width="24.3" height="13.32" fill="#d3bdf6"/><rect x="2658.54" y="1376.57" width="24.3" height="17.63" fill="#4f93e0"/><rect x="2658.54" y="1299.05" width="24.3" height="77.93" fill="#9dc8f7"/><rect x="2688.28" y="1436.87" width="24.3" height="17.63" fill="#f6cc45"/><rect x="2688.28" y="1411.03" width="24.3" height="26.24" fill="#6c5cd9"/><rect x="2688.28" y="1393.80" width="24.3" height="17.63" fill="#d3bdf6"/><rect x="2688.28" y="1355.04" width="24.3" height="39.16" fill="#4f93e0"/><rect x="2688.28" y="1286.13" width="24.3" height="69.31" fill="#9dc8f7"/><rect x="2718.02" y="1402.42" width="24.3" height="52.08" fill="#f6cc45"/><rect x="2718.02" y="1389.49" width="24.3" height="13.32" fill="#6c5cd9"/><rect x="2718.02" y="1385.19" width="24.3" height="4.71" fill="#d3bdf6"/><rect x="2718.02" y="1359.35" width="24.3" height="26.24" fill="#4f93e0"/><rect x="2718.02" y="1221.52" width="24.3" height="138.22" fill="#9dc8f7"/><rect x="2747.76" y="1436.87" width="24.3" height="17.63" fill="#f6cc45"/><rect x="2747.76" y="1432.56" width="24.3" height="4.71" fill="#6c5cd9"/><rect x="2747.76" y="1419.64" width="24.3" height="13.32" fill="#d3bdf6"/><rect x="2747.76" y="1363.65" width="24.3" height="56.39" fill="#4f93e0"/><rect x="2747.76" y="1260.28" width="24.3" height="103.77" fill="#9dc8f7"/><rect x="2777.50" y="1436.87" width="24.3" height="17.63" fill="#f6cc45"/><rect x="2777.50" y="1415.34" width="24.3" height="21.94" fill="#6c5cd9"/><rect x="2777.50" y="1411.03" width="24.3" height="4.71" fill="#d3bdf6"/><rect x="2777.50" y="1372.27" width="24.3" height="39.16" fill="#4f93e0"/><rect x="2777.50" y="1329.20" width="24.3" height="43.47" fill="#9dc8f7"/><rect x="2807.24" y="1350.73" width="24.3" height="103.77" fill="#f6cc45"/><rect x="2807.24" y="1333.50" width="24.3" height="17.63" fill="#6c5cd9"/><rect x="2807.24" y="1320.58" width="24.3" height="13.32" fill="#d3bdf6"/><rect x="2807.24" y="1286.13" width="24.3" height="34.86" fill="#4f93e0"/><rect x="2807.24" y="1199.99" width="24.3" height="86.54" fill="#9dc8f7"/><rect x="2836.98" y="1449.79" width="24.3" height="4.71" fill="#6c5cd9"/><rect x="2836.98" y="1436.87" width="24.3" height="13.32" fill="#d3bdf6"/><rect x="2836.98" y="1428.26" width="24.3" height="9.01" fill="#4f93e0"/><rect x="2836.98" y="1372.27" width="24.3" height="56.39" fill="#9dc8f7"/><rect x="2866.72" y="1436.87" width="24.3" height="17.63" fill="#f6cc45"/><rect x="2866.72" y="1411.03" width="24.3" height="26.24" fill="#6c5cd9"/><rect x="2866.72" y="1406.72" width="24.3" height="4.71" fill="#d3bdf6"/><rect x="2866.72" y="1393.80" width="24.3" height="13.32" fill="#4f93e0"/><rect x="2866.72" y="1311.97" width="24.3" height="82.23" fill="#9dc8f7"/><rect x="2866.72" y="1311.97" width="24.3" height="142.13" fill="url(#hatch2)"/><rect x="397.5" y="1453.60" width="2497.5" height="2" fill="#5d6469"/><rect x="530.50" y="1454.80" width="1.8" height="7" fill="#5d6469"/><rect x="708.95" y="1454.80" width="1.8" height="7" fill="#5d6469"/><rect x="887.40" y="1454.80" width="1.8" height="7" fill="#5d6469"/><rect x="1065.85" y="1454.80" width="1.8" height="7" fill="#5d6469"/><rect x="1244.30" y="1454.80" width="1.8" height="7" fill="#5d6469"/><rect x="1422.75" y="1454.80" width="1.8" height="7" fill="#5d6469"/><rect x="1601.20" y="1454.80" width="1.8" height="7" fill="#5d6469"/><rect x="1779.65" y="1454.80" width="1.8" height="7" fill="#5d6469"/><rect x="1958.10" y="1454.80" width="1.8" height="7" fill="#5d6469"/><rect x="2136.55" y="1454.80" width="1.8" height="7" fill="#5d6469"/><rect x="2315.00" y="1454.80" width="1.8" height="7" fill="#5d6469"/><rect x="2493.45" y="1454.80" width="1.8" height="7" fill="#5d6469"/><rect x="2671.90" y="1454.80" width="1.8" height="7" fill="#5d6469"/><rect x="2850.35" y="1454.80" width="1.8" height="7" fill="#5d6469"/></svg>
<span class="t" style="left:383.12px;top:1447.00px;font-size:16.5px;line-height:16.5px;color:#1c2b34;-webkit-text-stroke:0.22px #1c2b34;">0</span>
<span class="t" style="left:373.96px;top:1404.00px;font-size:16.5px;line-height:16.5px;color:#1c2b34;-webkit-text-stroke:0.22px #1c2b34;">10</span>
<span class="t" style="left:373.96px;top:1361.00px;font-size:16.5px;line-height:16.5px;color:#1c2b34;-webkit-text-stroke:0.22px #1c2b34;">20</span>
<span class="t" style="left:373.96px;top:1317.00px;font-size:16.5px;line-height:16.5px;color:#1c2b34;-webkit-text-stroke:0.22px #1c2b34;">30</span>
<span class="t" style="left:373.96px;top:1274.00px;font-size:16.5px;line-height:16.5px;color:#1c2b34;-webkit-text-stroke:0.22px #1c2b34;">40</span>
<span class="t" style="left:373.96px;top:1231.00px;font-size:16.5px;line-height:16.5px;color:#1c2b34;-webkit-text-stroke:0.22px #1c2b34;">50</span>
<span class="t" style="left:373.96px;top:1188.00px;font-size:16.5px;line-height:16.5px;color:#1c2b34;-webkit-text-stroke:0.22px #1c2b34;">60</span>
<span class="t" style="left:373.96px;top:1145.00px;font-size:16.5px;line-height:16.5px;color:#1c2b34;-webkit-text-stroke:0.22px #1c2b34;">70</span>
<span class="t" style="left:373.96px;top:1102.00px;font-size:16.5px;line-height:16.5px;color:#1c2b34;-webkit-text-stroke:0.22px #1c2b34;">80</span>
<span class="t" style="left:373.96px;top:1059.00px;font-size:16.5px;line-height:16.5px;color:#1c2b34;-webkit-text-stroke:0.22px #1c2b34;">90</span>
<span class="t" style="left:504.02px;top:1464.00px;font-size:16.5px;line-height:16.5px;color:#1c2b34;-webkit-text-stroke:0.22px #1c2b34;transform:scaleX(0.9805);">Wed 19</span>
<span class="t" style="left:688.86px;top:1464.00px;font-size:16.5px;line-height:16.5px;color:#1c2b34;-webkit-text-stroke:0.22px #1c2b34;">12:00</span>
<span class="t" style="left:862.97px;top:1464.00px;font-size:16.5px;line-height:16.5px;color:#1c2b34;-webkit-text-stroke:0.22px #1c2b34;transform:scaleX(0.9919);">Thu 20</span>
<span class="t" style="left:1045.76px;top:1464.00px;font-size:16.5px;line-height:16.5px;color:#1c2b34;-webkit-text-stroke:0.22px #1c2b34;">12:00</span>
<span class="t" style="left:1223.99px;top:1464.00px;font-size:16.5px;line-height:16.5px;color:#1c2b34;-webkit-text-stroke:0.22px #1c2b34;transform:scaleX(0.9926);">Fri 21</span>
<span class="t" style="left:1402.66px;top:1464.00px;font-size:16.5px;line-height:16.5px;color:#1c2b34;-webkit-text-stroke:0.22px #1c2b34;">12:00</span>
<span class="t" style="left:1578.57px;top:1464.00px;font-size:16.5px;line-height:16.5px;color:#1c2b34;-webkit-text-stroke:0.22px #1c2b34;transform:scaleX(0.9888);">Sat 22</span>
<span class="t" style="left:1759.56px;top:1464.00px;font-size:16.5px;line-height:16.5px;color:#1c2b34;-webkit-text-stroke:0.22px #1c2b34;">12:00</span>
<span class="t" style="left:1932.16px;top:1464.00px;font-size:16.5px;line-height:16.5px;color:#1c2b34;-webkit-text-stroke:0.22px #1c2b34;transform:scaleX(1.0151);">Nov 23</span>
<span class="t" style="left:2116.46px;top:1464.00px;font-size:16.5px;line-height:16.5px;color:#1c2b34;-webkit-text-stroke:0.22px #1c2b34;">12:00</span>
<span class="t" style="left:2286.83px;top:1464.00px;font-size:16.5px;line-height:16.5px;color:#1c2b34;-webkit-text-stroke:0.22px #1c2b34;transform:scaleX(1.0411);">Mon 24</span>
<span class="t" style="left:2473.36px;top:1464.00px;font-size:16.5px;line-height:16.5px;color:#1c2b34;-webkit-text-stroke:0.22px #1c2b34;">12:00</span>
<span class="t" style="left:2648.23px;top:1464.00px;font-size:16.5px;line-height:16.5px;color:#1c2b34;-webkit-text-stroke:0.22px #1c2b34;transform:scaleX(0.9749);">Tue 25</span>
<span class="t" style="left:2830.26px;top:1464.00px;font-size:16.5px;line-height:16.5px;color:#1c2b34;-webkit-text-stroke:0.22px #1c2b34;">12:00</span>
<div class="a" style="left:381.00px;top:1507.80px;width:17.80px;height:17.40px;background:#9dc8f7;border-radius:3px;"></div>
<span class="t" style="left:407.96px;top:1508.00px;font-size:18px;line-height:18px;color:#1c2b34;-webkit-text-stroke:0.22px #1c2b34;transform:scaleX(1.0677);">Error running tool (non-fatal)</span>
<div class="a" style="left:673.00px;top:1507.80px;width:17.80px;height:17.40px;background:#4f93e0;border-radius:3px;"></div>
<span class="t" style="left:700.53px;top:1508.00px;font-size:18px;line-height:18px;color:#1c2b34;-webkit-text-stroke:0.22px #1c2b34;transform:scaleX(1.0722);">Guardrail tripwire triggered</span>
<div class="a" style="left:953.50px;top:1507.80px;width:17.80px;height:17.40px;background:#d3bdf6;border-radius:3px;"></div>
<span class="t" style="left:980.51px;top:1508.00px;font-size:18px;line-height:18px;color:#1c2b34;-webkit-text-stroke:0.22px #1c2b34;transform:scaleX(1.0327);">Max turns exceeded</span>
<div class="a" style="left:1173.50px;top:1507.80px;width:17.80px;height:17.40px;background:#6c5cd9;border-radius:3px;"></div>
<span class="t" style="left:1199.97px;top:1508.00px;font-size:18px;line-height:18px;color:#1c2b34;-webkit-text-stroke:0.22px #1c2b34;transform:scaleX(1.0644);">Multiple handoffs requested</span>
<div class="a" style="left:1460.00px;top:1507.80px;width:17.80px;height:17.40px;background:#f6cc45;border-radius:3px;"></div>
<span class="t" style="left:1487.74px;top:1508.00px;font-size:18px;line-height:18px;color:#1c2b34;-webkit-text-stroke:0.22px #1c2b34;transform:scaleX(1.0531);">openai.AuthenticationError</span>
<span class="t" style="left:331.50px;top:1571.00px;font-size:24px;line-height:24px;color:#1c2b34;-webkit-text-stroke:0.22px #1c2b34;transform:scaleX(1.0426);">Top Errors by Error Type</span>
<svg class="a" style="left:1568.00px;top:1568.60px;" width="21.50" height="23.20" viewBox="0 0 21.5 23.2" fill="none"><path d="M10.7 15 V1.6 M4.5 7.9 L10.7 1.3 L16.9 7.9" stroke="#636b70" stroke-width="1.9" fill="none" stroke-linecap="butt" stroke-linejoin="miter"/><path d="M1.2 13.4 V22.2 H20.3 V13.4" stroke="#636b70" stroke-width="1.9" fill="none" stroke-linecap="butt" stroke-linejoin="miter"/></svg>
<span class="t" style="left:1626.50px;top:1571.00px;font-size:24px;line-height:24px;color:#1c2b34;-webkit-text-stroke:0.22px #1c2b34;transform:scaleX(1.0337);">Top Errors by Span Name</span>
<div class="a" style="left:2621.50px;top:1558.40px;width:217.00px;height:44.20px;background:#fff;border:1.4px solid #d3d7de;box-sizing:border-box;border-radius:5px;"></div>
<svg class="a" style="left:2639.80px;top:1569.40px;" width="21.80" height="21.80" viewBox="0 0 24 24" fill="none"><path d="M12 0.6 V23.4 M0.6 12 H23.4" stroke="#636b70" stroke-width="4.0" stroke-linecap="butt"/></svg>
<span class="t" style="left:2673.58px;top:1571.00px;font-size:21.5px;line-height:21.5px;color:#1c2b34;-webkit-text-stroke:0.22px #1c2b34;transform:scaleX(1.0375);">Create Monitor</span>
<svg class="a" style="left:2862.30px;top:1568.60px;" width="21.50" height="23.20" viewBox="0 0 21.5 23.2" fill="none"><path d="M10.7 15 V1.6 M4.5 7.9 L10.7 1.3 L16.9 7.9" stroke="#636b70" stroke-width="1.9" fill="none" stroke-linecap="butt" stroke-linejoin="miter"/><path d="M1.2 13.4 V22.2 H20.3 V13.4" stroke="#636b70" stroke-width="1.9" fill="none" stroke-linecap="butt" stroke-linejoin="miter"/></svg>
<div class="a" style="left:439.20px;top:1614.20px;width:1160.80px;height:90.60px;background:#c5daf6;"></div>
<div class="a" style="left:439.20px;top:1706.80px;width:508.80px;height:20.00px;background:#c5daf6;"></div>
<span class="t" style="left:343.60px;top:1644.00px;font-size:34px;line-height:34px;color:#1c2b34;font-weight:700;transform:scaleX(0.9784);">1,603</span>
<span class="t" style="left:449.72px;top:1645.00px;font-size:32px;line-height:32px;color:#0e1a22;-webkit-text-stroke:0.22px #0e1a22;transform:scaleX(1.0857);">Error running tool (non-fatal)</span>
<div class="a" style="left:1705.40px;top:1614.00px;width:1188.50px;height:44.80px;background:#c5daf6;"></div>
<div class="a" style="left:1705.40px;top:1660.90px;width:646.00px;height:43.80px;background:#c5daf6;"></div>
<div class="a" style="left:1705.40px;top:1707.20px;width:400.60px;height:20.00px;background:#c5daf6;"></div>
<span class="t" style="left:1638.90px;top:1627.00px;font-size:20.5px;line-height:20.5px;color:#1c2b34;font-weight:700;transform:scaleX(1.0545);">1,198</span>
<span class="t" style="left:1717.11px;top:1627.00px;font-size:20.5px;line-height:20.5px;color:#0e1a22;-webkit-text-stroke:0.22px #0e1a22;transform:scaleX(1.0836);">adjust_budget</span>
<span class="t" style="left:1656.63px;top:1673.00px;font-size:20.5px;line-height:20.5px;color:#1c2b34;font-weight:700;transform:scaleX(1.0674);">649</span>
<span class="t" style="left:1716.21px;top:1673.00px;font-size:20.5px;line-height:20.5px;color:#0e1a22;-webkit-text-stroke:0.22px #0e1a22;letter-spacing:0.144px;transform:scaleX(1.0900);">Budgeting Agent</span>
</div>
<script>(function(){var w=window.innerWidth;if(w&&Math.abs(w-2942)>2){document.body.style.zoom=(w/2942);}})();</script>
</body></html>
